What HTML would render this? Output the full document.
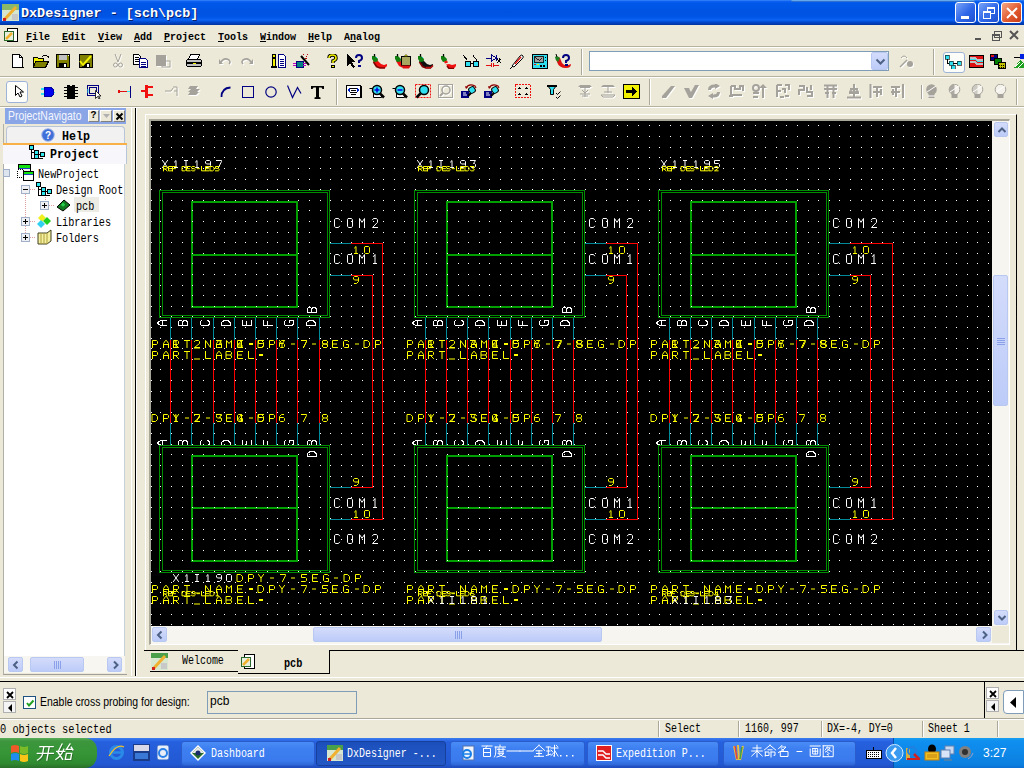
<!DOCTYPE html>
<html><head><meta charset="utf-8">
<style>
*{margin:0;padding:0;box-sizing:border-box}
html,body{width:1024px;height:768px;overflow:hidden;background:#ECE9D8;font-family:"Liberation Sans",sans-serif;position:relative}
.a{position:absolute}
text.sch{font-family:"Liberation Mono",monospace}
#title{left:0;top:0;width:1024px;height:25px;background:linear-gradient(#4a90f8 0,#0d63f2 1px,#0058ea 3px,#0053e2 12px,#0055e6 17px,#0c64f4 20px,#0048cf 22px,#00339f 25px)}
.ttl{left:21px;top:6px;color:#fff;font:bold 13.6px "Liberation Mono",monospace;white-space:pre;text-shadow:1px 1px 0 #0a1f6a;transform:scaleX(.988);transform-origin:0 0}
.tb{width:21px;height:21px;top:2px;border:1px solid #fff;border-radius:3px;background:linear-gradient(135deg,#7aa4f8,#2d66e8 55%,#1e50d0)}
.ss{position:absolute;font:11px "Liberation Mono",monospace;white-space:pre;color:#000;transform:scaleX(.91);transform-origin:0 0;line-height:12px}
.mn{position:absolute;top:31px;font:bold 11px "Liberation Mono",monospace;white-space:pre;color:#000;transform:scaleX(.91);transform-origin:0 0;line-height:12px}
.tr{position:absolute;font:12px "Liberation Mono",monospace;white-space:pre;color:#000;transform:scaleX(.85);transform-origin:0 0;line-height:12px}
.sb{position:absolute;font:bold 12px "Liberation Mono",monospace;white-space:pre;color:#000;transform:scaleX(.85);transform-origin:0 0;line-height:12px}
.hl{background:#fff;height:1px;width:1024px;left:0}
.dl{background:#b6b29e;height:1px;width:1024px;left:0}
.sep{width:2px;border-left:1px solid #aca899;border-right:1px solid #fff}
.xpb{border:1px solid #b9c8f0;border-radius:2px;background:linear-gradient(#d4dcfb,#bccbf8)}
.chev{stroke:#4d6185;stroke-width:2;fill:none}
.mdi{width:16px;height:17px;top:26px}
</style></head><body>

<!-- TITLE BAR -->
<div id="title" class="a">
  <div class="a ttl">DxDesigner - [sch\pcb]</div>
  <div class="a" style="left:791px;top:0;width:184px;height:2px;background:#62a8ec;border-bottom:1px solid #2f6fd0;border-radius:0 0 3px 3px"></div>
  <svg class="a" style="left:2px;top:4px" width="17" height="17" viewBox="0 0 17 17" shape-rendering="crispEdges">
    <rect x="0" y="0" width="17" height="17" fill="#d6e6cf"/><rect x="0" y="0" width="17" height="6" fill="#8ab86a"/>
    <rect x="10" y="10" width="6" height="6" fill="#c8c8c8"/>
    <path d="M3 15 L14 3" stroke="#f0b030" stroke-width="3" shape-rendering="auto"/><rect x="1" y="14" width="3" height="3" fill="#d02020"/>
  </svg>
  <div class="a tb" style="left:955px"><div class="a" style="left:5px;top:13px;width:8px;height:3px;background:#fff"></div></div>
  <div class="a tb" style="left:978px"><div class="a" style="left:8px;top:4px;width:8px;height:7px;border:1px solid #fff;border-top-width:2px"></div><div class="a" style="left:4px;top:8px;width:8px;height:8px;border:1px solid #fff;border-top-width:2px;background:#3a70e8"></div></div>
  <div class="a tb" style="left:1001px;background:linear-gradient(135deg,#f4a888,#e25a30 55%,#c83c18)"><svg class="a" style="left:4px;top:4px" width="12" height="12"><path d="M1 1L11 11M11 1L1 11" stroke="#fff" stroke-width="2"/></svg></div>
</div>

<!-- MENU -->
<svg class="a" style="left:3px;top:27px" width="17" height="17" viewBox="0 0 17 17">
  <rect x="4.5" y="1.5" width="10" height="13" fill="#fff" stroke="#000"/><rect x="1.5" y="4.5" width="9" height="9" fill="#e6f0e0" stroke="#2c6a2c"/>
  <path d="M3 12L9 6" stroke="#f0b030" stroke-width="2.5"/>
</svg>
<div class="mn" style="left:26px"><u>F</u>ile</div>
<div class="mn" style="left:62px"><u>E</u>dit</div>
<div class="mn" style="left:98px"><u>V</u>iew</div>
<div class="mn" style="left:134px"><u>A</u>dd</div>
<div class="mn" style="left:164px"><u>P</u>roject</div>
<div class="mn" style="left:218px"><u>T</u>ools</div>
<div class="mn" style="left:260px"><u>W</u>indow</div>
<div class="mn" style="left:308px"><u>H</u>elp</div>
<div class="mn" style="left:344px">A<u>n</u>alog</div>
<svg class="a" style="left:970px;top:27px" width="54" height="17" shape-rendering="crispEdges">
  <rect x="5" y="11" width="6" height="2" fill="#555"/>
  <rect x="22" y="7" width="7" height="6" fill="none" stroke="#555" stroke-width="1"/><rect x="21.5" y="6.5" width="7" height="2" fill="#555"/>
  <rect x="24.5" y="4.5" width="7" height="6" fill="none" stroke="#555"/>
  <path d="M40 4L48 12M48 4L40 12" stroke="#555" stroke-width="2" shape-rendering="auto"/>
</svg>
<div class="a dl" style="top:46px"></div>
<div class="a hl" style="top:47px"></div>

<!-- TOOLBAR ROW 1/2 separators -->
<div class="a dl" style="top:76px"></div>
<div class="a hl" style="top:77px"></div>
<div class="a dl" style="top:106px"></div>
<div class="a hl" style="top:107px"></div>
<div class="a sep" style="left:581px;top:49px;height:26px"></div>
<div class="a sep" style="left:933px;top:49px;height:26px"></div>
<div class="a sep" style="left:336px;top:79px;height:26px"></div>
<div class="a sep" style="left:649px;top:79px;height:26px"></div>
<div class="a sep" style="left:1016px;top:79px;height:26px"></div>
<!-- combo -->
<div class="a" style="left:589px;top:51px;width:300px;height:20px;background:#fff;border:1px solid #7f9db9"></div>
<div class="a xpb" style="left:871px;top:52px;width:17px;height:18px"><svg class="a" style="left:3px;top:5px" width="11" height="8"><path class="chev" d="M1.5 1.5L5.5 5.5L9.5 1.5"/></svg></div>
<!-- selected buttons -->
<div class="a" style="left:943px;top:52px;width:22px;height:21px;background:#fcfcf9;border:1px solid #9db4d8;border-radius:3px"></div>
<div class="a" style="left:6px;top:81px;width:22px;height:22px;background:#fcfcf9;border:1px solid #9db4d8;border-radius:3px"></div>
<svg class="a" style="left:12px;top:54px" width="12" height="14" viewBox="0 0 12 14" shape-rendering="crispEdges"><path d="M0.5 0.5h7l3 3v9.5h-10z" fill="#fff" stroke="#000"/><path d="M7.5 0.5v3h3" fill="none" stroke="#000"/><rect x="1" y="13" width="11" height="1" fill="#000"/></svg>
<svg class="a" style="left:33px;top:54px" width="16" height="14" viewBox="0 0 16 14" shape-rendering="crispEdges"><path d="M0.5 3.5h4l1 1h5v8h-10z" fill="#f0f000" stroke="#000"/><path d="M2.5 7.5h13l-3 6h-12z" fill="#808000" stroke="#000"/><path d="M9 3q3-4 6 0" fill="none" stroke="#000"/><path d="M13 2h3v3z" fill="#000"/></svg>
<svg class="a" style="left:56px;top:54px" width="15" height="14" viewBox="0 0 15 14" shape-rendering="crispEdges"><rect x="0.5" y="0.5" width="13" height="13" fill="#808000" stroke="#000"/><rect x="3" y="1" width="8" height="5" fill="#c0c0c0"/><rect x="3" y="9" width="8" height="4" fill="#000"/><rect x="8" y="10" width="2" height="3" fill="#fff"/><rect x="12" y="1" width="1" height="1" fill="#fff"/></svg>
<svg class="a" style="left:79px;top:54px" width="15" height="14" viewBox="0 0 15 14" shape-rendering="crispEdges"><rect x="0.5" y="0.5" width="13" height="13" fill="#808000" stroke="#000"/><rect x="3" y="1" width="8" height="5" fill="#808000"/><rect x="3" y="9" width="8" height="4" fill="#000"/><rect x="8" y="10" width="2" height="3" fill="#fff"/><path d="M1 7l3 4 8-9" stroke="#f0f000" stroke-width="2" fill="none" shape-rendering="auto"/></svg>
<svg class="a" style="left:113px;top:54px" width="11" height="15" viewBox="0 0 11 15"><g transform="translate(1 1)" fill="#fff" stroke="#fff"><path d="M2 0l3 8M8 0l-3 8" stroke-width="1" fill="none"/><circle cx="2.5" cy="11" r="2" fill="none"/><circle cx="7.5" cy="11" r="2" fill="none"/></g><g fill="#a4a29a" stroke="#a4a29a"><path d="M2 0l3 8M8 0l-3 8" stroke-width="1" fill="none"/><circle cx="2.5" cy="11" r="2" fill="none"/><circle cx="7.5" cy="11" r="2" fill="none"/></g></svg>
<svg class="a" style="left:133px;top:54px" width="16" height="14" viewBox="0 0 16 14" shape-rendering="crispEdges"><path d="M0.5 0.5h5l2 2v8h-7z" fill="#fff" stroke="#000"/><path d="M2 3h4M2 5h4M2 7h4" stroke="#000"/><path d="M6.5 4.5h6l2 2v7h-8z" fill="#fff" stroke="#000080"/><path d="M8 8h5M8 10h5M8 12h5" stroke="#000080"/></svg>
<svg class="a" style="left:156px;top:54px" width="16" height="15" viewBox="0 0 16 15"><g transform="translate(1 1)" fill="#fff" stroke="#fff"><rect x="0" y="1" width="10" height="11" stroke="none"/><rect x="6" y="7" width="8" height="6" fill="none" stroke-width="1"/></g><g fill="#a4a29a" stroke="#a4a29a"><rect x="0" y="1" width="10" height="11" stroke="none"/><rect x="6" y="7" width="8" height="6" fill="none" stroke-width="1"/></g></svg>
<svg class="a" style="left:186px;top:54px" width="17" height="14" viewBox="0 0 17 14" shape-rendering="crispEdges"><path d="M4.5 0.5h9l-2 5h-9z" fill="#fff" stroke="#000"/><rect x="0.5" y="5.5" width="15" height="7" rx="2" fill="#c0c0c0" stroke="#000"/><rect x="1" y="8" width="15" height="2" fill="#000"/><rect x="7" y="9" width="3" height="1" fill="#f0f000"/><rect x="2" y="12" width="12" height="1" fill="#000"/></svg>
<svg class="a" style="left:219px;top:57px" width="13" height="9" viewBox="0 0 13 9"><g transform="translate(1 1)" fill="#fff" stroke="#fff"><path d="M2 5q3-5 8-2q2 2 0 4" fill="none" stroke-width="1.5"/><path d="M0 2v5h4z" stroke="none"/></g><g fill="#a4a29a" stroke="#a4a29a"><path d="M2 5q3-5 8-2q2 2 0 4" fill="none" stroke-width="1.5"/><path d="M0 2v5h4z" stroke="none"/></g></svg>
<svg class="a" style="left:241px;top:57px" width="13" height="9" viewBox="0 0 13 9"><g transform="translate(1 1)" fill="#fff" stroke="#fff"><path d="M10 5q-3-5-8-2q-2 2 0 4" fill="none" stroke-width="1.5"/><path d="M12 2v5h-4z" stroke="none"/></g><g fill="#a4a29a" stroke="#a4a29a"><path d="M10 5q-3-5-8-2q-2 2 0 4" fill="none" stroke-width="1.5"/><path d="M12 2v5h-4z" stroke="none"/></g></svg>
<svg class="a" style="left:271px;top:54px" width="16" height="14" viewBox="0 0 16 14" shape-rendering="crispEdges"><rect x="1.5" y="4.5" width="3" height="8" fill="#f0f000" stroke="#000"/><rect x="1.5" y="0.5" width="3" height="3" fill="#f0f000" stroke="#000"/><rect x="0" y="12" width="6" height="2" fill="#000"/><path d="M7.5 0.5h5l2 2v11h-7z" fill="#fff" stroke="#000080"/><path d="M9 5h4M9 7h4M9 9h4M9 11h4" stroke="#000080"/></svg>
<svg class="a" style="left:293px;top:54px" width="17" height="14" viewBox="0 0 17 14" shape-rendering="crispEdges"><rect x="3" y="7" width="7" height="6" fill="#008080" stroke="#000080"/><path d="M0 9h3M0 11h3M10 9h3M10 11h3" stroke="#c000c0"/><path d="M8 2l8 9" stroke="#000" stroke-width="2" shape-rendering="auto"/><path d="M10 0h1M14 0h1M13 2h1M12 4h2" stroke="#c00000"/></svg>
<svg class="a" style="left:327px;top:54px" width="11" height="14" viewBox="0 0 11 14" shape-rendering="crispEdges"><path d="M2 4q0-3 3.5-3t3.5 3q0 2-3 3v2" fill="none" stroke="#000" stroke-width="3.5" shape-rendering="auto"/><path d="M2 4q0-3 3.5-3t3.5 3q0 2-3 3v2" fill="none" stroke="#f0f000" stroke-width="1.6" shape-rendering="auto"/><rect x="4" y="10.5" width="4" height="3" fill="#000"/><rect x="5" y="11.5" width="2" height="1" fill="#f0f000"/></svg>
<svg class="a" style="left:347px;top:54px" width="17" height="15" viewBox="0 0 17 15" shape-rendering="crispEdges"><path d="M0 0v12l3-3 3 5 2-1-3-5h4z" fill="#000"/><path d="M9 4q0-3 3-3t3 3q0 2-3 3v2" fill="none" stroke="#000080" stroke-width="2" shape-rendering="auto"/><rect x="11" y="11" width="3" height="2" fill="#000080"/></svg>
<svg class="a" style="left:371px;top:54px" width="17" height="15" viewBox="0 0 17 15"><path d="M2 7L6 6L10 10L13 11L16 10L16 12L14 14L9 14L5 12Z" fill="#f01010"/><path d="M2.5 8L5.5 12.5L9 14H14" stroke="#800000" stroke-width="1.6" fill="none"/><path d="M1 2H4L7 5L6.5 7.5L3 8L1 5Z" fill="#108010"/><path d="M3.5 0V2.5" stroke="#000" stroke-width="1.3"/><path d="M5 3L6 4" stroke="#20c0c0"/></svg>
<svg class="a" style="left:394px;top:54px" width="17" height="15" viewBox="0 0 17 15"><path d="M2 7L6 6L8 9V14H9L5 12Z" fill="#f01010"/><path d="M1 2H4L7 5L6.5 7.5L3 8L1 5Z" fill="#108010"/><path d="M3.5 0V2.5" stroke="#000" stroke-width="1.3"/><rect x="7.5" y="2.5" width="9" height="9" fill="#a8a860" stroke="#000"/><path d="M10 2.5L12 0.5L14 2.5Z" fill="#f0f000" stroke="#000" stroke-width=".6"/><path d="M7 11.5H17L15 14.5H9Z" fill="#e01010"/></svg>
<svg class="a" style="left:417px;top:54px" width="17" height="15" viewBox="0 0 17 15"><path d="M2 7L6 6L10 10L13 11L16 10L16 12L14 14L9 14L5 12Z" fill="#101010"/><path d="M2.5 8L5.5 12.5L9 14H14" stroke="#800000" stroke-width="1.6" fill="none"/><path d="M1 2H4L7 5L6.5 7.5L3 8L1 5Z" fill="#108010"/><path d="M3.5 0V2.5" stroke="#000" stroke-width="1.3"/><path d="M5 3L6 4" stroke="#20c0c0"/><path d="M9 13.5H14L16 11.5" stroke="#c01010" stroke-width="1.5" fill="none"/></svg>
<svg class="a" style="left:440px;top:54px" width="17" height="15" viewBox="0 0 17 15"><path d="M1 2H4L7 5L6.5 7.5L3 8L1 5Z" fill="#108010"/><path d="M3.5 0V2.5" stroke="#000" stroke-width="1.3"/><path d="M4 7.5L7 6.5L8 8.5L5 9.5Z" fill="#f01010"/><path d="M6 10.5L9 10L12 11L16 10L16 12L14 14.5L9 14.5Z" fill="#f01010"/><path d="M7 12L9 14.5H14" stroke="#800000" stroke-width="1.5" fill="none"/></svg>
<svg class="a" style="left:463px;top:55px" width="17" height="12" viewBox="0 0 17 12" shape-rendering="crispEdges"><path d="M0.5 0.5l4 5M10 0.5l4 5" stroke="#000" fill="none"/><rect x="2.5" y="6.5" width="5" height="5" rx="1" fill="#30e0f0" stroke="#000"/><rect x="10.5" y="6.5" width="5" height="5" rx="1" fill="#30e0f0" stroke="#000"/><path d="M7 8h4" stroke="#000"/></svg>
<svg class="a" style="left:486px;top:54px" width="16" height="14" viewBox="0 0 16 14" shape-rendering="crispEdges"><path d="M0 4h6M10 4h2" stroke="#000080"/><path d="M5.5 1v6l5-3z" fill="none" stroke="#000080"/><path d="M10.5 1v6" stroke="#000080"/><path d="M11 5l4 4M15 5l-4 4M13 4v3" stroke="#000" /><path d="M0 11h5M8 11h5M5.5 9v4M7.5 9v4" stroke="#e01010"/></svg>
<svg class="a" style="left:510px;top:54px" width="15" height="15" viewBox="0 0 15 15"><path d="M2 12l8-10q2-2 3 0q1 1-1 3l-8 8z" fill="#fff" stroke="#000" shape-rendering="auto"/><path d="M5 10l6-7" stroke="#e01010" stroke-width="1.3" shape-rendering="auto"/><path d="M0 15l3-3" stroke="#000" shape-rendering="auto"/></svg>
<svg class="a" style="left:532px;top:54px" width="16" height="15" viewBox="0 0 16 15" shape-rendering="crispEdges"><rect x="0.5" y="0.5" width="15" height="14" fill="#30e0f0" stroke="#000"/><rect x="2" y="2" width="9" height="6" fill="#a0a0a0" stroke="#000" stroke-width=".8"/><path d="M3 3l3.5 3 3.5-3" stroke="#000" fill="none" stroke-width=".8"/><rect x="2" y="10" width="2" height="1" fill="#e01010"/><rect x="5" y="10" width="2" height="1" fill="#f0f000"/><rect x="8" y="11" width="2" height="2" fill="#000"/><rect x="11" y="11" width="2" height="2" fill="#000"/><rect x="13" y="3" width="1" height="1" fill="#000"/><rect x="13" y="6" width="1" height="1" fill="#000"/></svg>
<svg class="a" style="left:555px;top:54px" width="17" height="15" viewBox="0 0 17 15"><path d="M1 4q2-2 4 0l2 5q3 4 9 1q0 4-5 4q-7 0-9-6z" fill="#e01010"/><path d="M0 3q2-2 5 1l-2 4q-3-2-3-5z" fill="#208020"/><path d="M8 4q0-3 3-3t3 3q0 2-3 3v2" fill="none" stroke="#000080" stroke-width="2"/><rect x="10" y="10" width="3" height="2" fill="#000080"/><path d="M1 0l1 3" stroke="#000"/></svg>
<svg class="a" style="left:899px;top:55px" width="17" height="14" viewBox="0 0 17 14"><g transform="translate(1 1)" fill="#fff" stroke="#fff"><path d="M1 12l7-7" stroke-width="1.5" fill="none"/><path d="M2 3q3-4 6 0" fill="none" stroke-width="1"/><circle cx="11" cy="9" r="3" stroke="none"/></g><g fill="#a4a29a" stroke="#a4a29a"><path d="M1 12l7-7" stroke-width="1.5" fill="none"/><path d="M2 3q3-4 6 0" fill="none" stroke-width="1"/><circle cx="11" cy="9" r="3" stroke="none"/></g></svg>
<svg class="a" style="left:945px;top:55px" width="17" height="14" viewBox="0 0 17 14" shape-rendering="crispEdges"><path d="M2 2v6h4M6 8v4h4M6 8h6" stroke="#000" fill="none"/><rect x="0" y="0" width="4" height="4" fill="#30e0f0" stroke="#000" stroke-width=".6"/><rect x="4" y="6" width="4" height="4" fill="#30e0f0" stroke="#000" stroke-width=".6"/><rect x="12" y="6" width="4" height="4" fill="#30e0f0" stroke="#000" stroke-width=".6"/><rect x="6" y="10" width="4" height="4" fill="#30e0f0" stroke="#000" stroke-width=".6"/></svg>
<svg class="a" style="left:969px;top:55px" width="15" height="13" viewBox="0 0 15 13" shape-rendering="crispEdges"><rect x="0.5" y="0.5" width="14" height="12" fill="#e01010" stroke="#000"/><path d="M1 3h5l2 2h6M1 7h5l2 2h6" stroke="#c0c0c0" stroke-width="1.5" fill="none"/><path d="M1 4h5l2 2h6" stroke="#30e0f0" fill="none"/></svg>
<svg class="a" style="left:990px;top:54px" width="16" height="15" viewBox="0 0 16 15" shape-rendering="crispEdges"><rect x="0.5" y="0.5" width="7" height="6" fill="#000080" stroke="#000"/><rect x="1" y="1" width="3" height="2" fill="#e01010"/><rect x="4.5" y="4.5" width="7" height="6" fill="#008000" stroke="#000"/><rect x="8.5" y="8.5" width="7" height="6" fill="#c0c000" stroke="#000"/><path d="M9 11h6M9 13h6" stroke="#000" stroke-dasharray="1 1"/></svg>
<svg class="a" style="left:1014px;top:54px" width="10" height="15" viewBox="0 0 10 15" shape-rendering="crispEdges"><path d="M0 14l6-8 4 4v4z" fill="#20a020"/><path d="M1 13l5-5M4 14l5-5" stroke="#fff"/><rect x="6" y="0" width="4" height="5" fill="#0020e0"/><path d="M0 3h6" stroke="#000"/></svg>
<svg class="a" style="left:15px;top:85px" width="9" height="13" viewBox="0 0 9 13"><path d="M0.5 0.5v10l2.5-2.5 2 4 2-1-2-4h3.5z" fill="#fff" stroke="#000"/></svg>
<svg class="a" style="left:41px;top:87px" width="14" height="10" viewBox="0 0 14 10" shape-rendering="crispEdges"><path d="M3 0.5h5q5 0 5 4.5t-5 4.5h-5z" fill="#0000f0" stroke="#0000a0"/><path d="M0 2h3M0 7h3" stroke="#30e0f0" stroke-width="1.5"/><path d="M13 5h1" stroke="#30e0f0"/></svg>
<svg class="a" style="left:64px;top:85px" width="14" height="14" viewBox="0 0 14 14" shape-rendering="crispEdges"><rect x="3" y="0" width="8" height="14" fill="#000"/><path d="M0 2h3M0 5h3M0 8h3M0 11h3M11 2h3M11 5h3M11 8h3M11 11h3" stroke="#000"/><rect x="6" y="0" width="2" height="1" fill="#ece9d8"/></svg>
<svg class="a" style="left:87px;top:85px" width="14" height="14" viewBox="0 0 14 14"><rect x="0.5" y="0.5" width="11" height="10" fill="none" stroke="#000080"/><rect x="2.5" y="2.5" width="7" height="6" fill="none" stroke="#000080"/><path d="M1 4v4" stroke="#30e0f0"/><path d="M8.5 5.5v8l2-2 1.5 2.5 1-.5-1.5-2.5h2.5z" fill="#fff" stroke="#000" stroke-width=".8"/></svg>
<svg class="a" style="left:118px;top:86px" width="14" height="12" viewBox="0 0 14 12" shape-rendering="crispEdges"><rect x="0" y="4" width="2" height="3" fill="#e01010"/><path d="M0 5.5h9" stroke="#e01010" stroke-width="1.2"/><path d="M9 5.5h3" stroke="#30e0f0"/><path d="M12.5 0v12" stroke="#000080" stroke-width="1.5"/></svg>
<svg class="a" style="left:141px;top:85px" width="13" height="13" viewBox="0 0 13 13" shape-rendering="crispEdges"><rect x="4" y="0" width="3" height="13" fill="#f01010"/><path d="M0 6h4M7 2h5M7 10h5" stroke="#f01010" stroke-width="1.5"/></svg>
<svg class="a" style="left:165px;top:85px" width="15" height="13" viewBox="0 0 15 13"><g transform="translate(1 1)" fill="#fff" stroke="#fff"><path d="M0 6h6M6 6l2-3M8 2h4v9M9 6h3" fill="none" stroke-width="1"/></g><g fill="#a4a29a" stroke="#a4a29a"><path d="M0 6h6M6 6l2-3M8 2h4v9M9 6h3" fill="none" stroke-width="1"/></g></svg>
<svg class="a" style="left:186px;top:84px" width="17" height="16" viewBox="0 0 17 16"><g transform="translate(1 1)" fill="#fff" stroke="#fff"><path d="M4 2h8l-2 3h4l-3 3h2l-3 3h-8l2-3h-2l3-3h-3z" stroke="none"/></g><g fill="#a4a29a" stroke="#a4a29a"><path d="M4 2h8l-2 3h4l-3 3h2l-3 3h-8l2-3h-2l3-3h-3z" stroke="none"/></g></svg>
<svg class="a" style="left:220px;top:86px" width="12" height="11" viewBox="0 0 12 11"><path d="M1.5 11q0-9 9-9.5" fill="none" stroke="#000080" stroke-width="1.8"/></svg>
<svg class="a" style="left:242px;top:86px" width="12" height="12" viewBox="0 0 12 12" shape-rendering="crispEdges"><rect x="0.5" y="0.5" width="11" height="11" fill="none" stroke="#000080" stroke-width="1.2"/></svg>
<svg class="a" style="left:265px;top:86px" width="12" height="12" viewBox="0 0 12 12"><circle cx="6" cy="6" r="5.2" fill="none" stroke="#000080" stroke-width="1.2"/></svg>
<svg class="a" style="left:287px;top:85px" width="15" height="14" viewBox="0 0 15 14"><path d="M0.5 0.5l5 12 5-10 3.5 6" fill="none" stroke="#000080" stroke-width="1.2"/></svg>
<svg class="a" style="left:311px;top:86px" width="13" height="13" viewBox="0 0 13 13"><path d="M0 0h13v3h-1.5l-1-1.5h-2.5v9.5l1.5.5v1.5h-6v-1.5l1.5-.5v-9.5h-2.5l-1 1.5h-1.5z" fill="#000"/></svg>
<svg class="a" style="left:346px;top:85px" width="16" height="13" viewBox="0 0 16 13" shape-rendering="crispEdges"><rect x="0.5" y="0.5" width="14" height="12" fill="#fff" stroke="#000"/><rect x="14" y="1" width="2" height="12" fill="#000"/><path d="M4 3h7M5 5h5M4 7h7M5 9h5" stroke="#000"/><path d="M1 5l3-2v4zM14 5l-3-2v4z" fill="#0020c0"/></svg>
<svg class="a" style="left:369px;top:84px" width="16" height="15" viewBox="0 0 16 15"><path d="M0.5 4.5h4v9h8v-3" fill="#fff" stroke="#000"/><circle cx="8" cy="6" r="4.5" fill="#30e0f0" stroke="#000" stroke-width="1.5"/><path d="M11 9.5l4 4" stroke="#000" stroke-width="2.5"/><path d="M5.5 6h5M8 3.5v5" stroke="#0000e0" stroke-width="1.5"/></svg>
<svg class="a" style="left:392px;top:84px" width="16" height="15" viewBox="0 0 16 15"><path d="M0.5 4.5h4v9h8v-3" fill="#fff" stroke="#000"/><circle cx="8" cy="6" r="4.5" fill="#30e0f0" stroke="#000" stroke-width="1.5"/><path d="M11 9.5l4 4" stroke="#000" stroke-width="2.5"/><path d="M5.5 6h5" stroke="#0000e0" stroke-width="1.5"/></svg>
<svg class="a" style="left:415px;top:84px" width="17" height="15" viewBox="0 0 17 15"><rect x="0.5" y="0.5" width="15" height="13" fill="none" stroke="#f01010" stroke-dasharray="2 1"/><circle cx="9" cy="6" r="4.5" fill="#30e0f0" stroke="#000" stroke-width="1.5"/><path d="M5.5 9.5l-4 4" stroke="#000" stroke-width="2.5"/></svg>
<svg class="a" style="left:438px;top:84px" width="17" height="15" viewBox="0 0 17 15"><g transform="translate(1 1)" fill="#fff" stroke="#fff"><rect x="0.5" y="0.5" width="14" height="13" fill="none" stroke-width="1"/><circle cx="8" cy="6" r="4" fill="none" stroke-width="1.5"/><path d="M5 9l-3 3" stroke-width="2"/></g><g fill="#a4a29a" stroke="#a4a29a"><rect x="0.5" y="0.5" width="14" height="13" fill="none" stroke-width="1"/><circle cx="8" cy="6" r="4" fill="none" stroke-width="1.5"/><path d="M5 9l-3 3" stroke-width="2"/></g></svg>
<svg class="a" style="left:461px;top:84px" width="16" height="15" viewBox="0 0 16 15"><rect x="0" y="7" width="8" height="7" fill="#000080"/><path d="M2 9h3M2 11h4" stroke="#fff"/><path d="M7 12l3-3" stroke="#000" stroke-width="2"/><rect x="8" y="3" width="6" height="6" rx="2" fill="#30e0f0" stroke="#000" transform="rotate(-30 11 6)"/><path d="M5 4q3-5 9-2l1 2" fill="none" stroke="#900000" stroke-width="1.2"/><path d="M4 2l1 3 2-2z" fill="#900000"/></svg>
<svg class="a" style="left:484px;top:84px" width="16" height="15" viewBox="0 0 16 15"><rect x="0" y="7" width="8" height="7" fill="#000080"/><path d="M2 9h3M2 11h4" stroke="#fff"/><path d="M7 12l3-3" stroke="#000" stroke-width="2"/><rect x="8" y="3" width="6" height="6" rx="2" fill="#30e0f0" stroke="#000" transform="rotate(-30 11 6)"/><path d="M5 4q3-5 9-2l1 2" fill="none" stroke="#900000" stroke-width="1.2"/><path d="M4 2l1 3 2-2z" fill="#900000"/></svg>
<svg class="a" style="left:515px;top:84px" width="16" height="14" viewBox="0 0 16 14" shape-rendering="crispEdges"><rect x="0.5" y="0.5" width="15" height="13" fill="none" stroke="#f01010" stroke-dasharray="2 1"/><path d="M4 4h1M4 3v2M11 4h1M11 3v2M4 10h1M4 9v2M11 10h1M11 9v2" stroke="#000"/><path d="M3 4h3M10 4h3M3 10h3M10 10h3" stroke="#000"/></svg>
<svg class="a" style="left:547px;top:85px" width="15" height="14" viewBox="0 0 15 14"><path d="M0.5 0.5h9l-3 4v5h-3v-5z" fill="#30e0f0" stroke="#000" /><path d="M0 0h10v2h-10z" fill="#000"/><path d="M9 8l1.5 1.5 3-3M9 12l1.5 1.5 3-3" stroke="#000" fill="none"/></svg>
<svg class="a" style="left:577px;top:84px" width="17" height="15" viewBox="0 0 17 15"><g transform="translate(1 1)" fill="#fff" stroke="#fff"><path d="M1 3h14l-2 -2h-10z" stroke="none"/><path d="M3 3h10v1h-10z" stroke="none"/><path d="M8 4v9M5 6l3 3 3-3M3 10h10M5 12h6" fill="none" stroke-width="1"/></g><g fill="#a4a29a" stroke="#a4a29a"><path d="M1 3h14l-2 -2h-10z" stroke="none"/><path d="M3 3h10v1h-10z" stroke="none"/><path d="M8 4v9M5 6l3 3 3-3M3 10h10M5 12h6" fill="none" stroke-width="1"/></g></svg>
<svg class="a" style="left:600px;top:84px" width="17" height="15" viewBox="0 0 17 15"><g transform="translate(1 1)" fill="#fff" stroke="#fff"><path d="M1 3h14l-2 -2h-10z" stroke="none"/><path d="M8 3v6M4 8h8M1 11h14l-2 2h-10z" fill="none" stroke-width="1"/></g><g fill="#a4a29a" stroke="#a4a29a"><path d="M1 3h14l-2 -2h-10z" stroke="none"/><path d="M8 3v6M4 8h8M1 11h14l-2 2h-10z" fill="none" stroke-width="1"/></g></svg>
<svg class="a" style="left:623px;top:84px" width="17" height="15" viewBox="0 0 17 15" shape-rendering="crispEdges"><rect x="0.5" y="0.5" width="16" height="14" fill="#f0f000" stroke="#000"/><path d="M3 6h6v-3l5 4.5-5 4.5v-3h-6z" fill="#000"/></svg>
<svg class="a" style="left:662px;top:85px" width="15" height="15" viewBox="0 0 15 15"><g transform="translate(1 1)" fill="#fff" stroke="#fff"><path d="M0 11l9-10h4l-9 12h-4z" stroke="none"/></g><g fill="#a4a29a" stroke="#a4a29a"><path d="M0 11l9-10h4l-9 12h-4z" stroke="none"/></g></svg>
<svg class="a" style="left:684px;top:85px" width="16" height="15" viewBox="0 0 16 15"><g transform="translate(1 1)" fill="#fff" stroke="#fff"><path d="M0 3h5l2 4 4-7h4l-7 13h-3z" stroke="none"/></g><g fill="#a4a29a" stroke="#a4a29a"><path d="M0 3h5l2 4 4-7h4l-7 13h-3z" stroke="none"/></g></svg>
<svg class="a" style="left:707px;top:84px" width="15" height="16" viewBox="0 0 15 16"><g transform="translate(1 1)" fill="#fff" stroke="#fff"><path d="M2.5 6q0-4 5-4h2M11.5 8q0 4-5 4h-2" fill="none" stroke-width="3"/><path d="M8 -1l5 3-5 3zM6 15l-5-3 5-3z" stroke="none"/></g><g fill="#a4a29a" stroke="#a4a29a"><path d="M2.5 6q0-4 5-4h2M11.5 8q0 4-5 4h-2" fill="none" stroke-width="3"/><path d="M8 -1l5 3-5 3zM6 15l-5-3 5-3z" stroke="none"/></g></svg>
<svg class="a" style="left:729px;top:84px" width="16" height="15" viewBox="0 0 16 15"><g transform="translate(1 1)" fill="#fff" stroke="#fff"><path d="M2 2v9h11M2 2h4v3h5v-3h3v5" fill="none" stroke-width="2"/><path d="M0 12h4" stroke-width="2"/></g><g fill="#a4a29a" stroke="#a4a29a"><path d="M2 2v9h11M2 2h4v3h5v-3h3v5" fill="none" stroke-width="2"/><path d="M0 12h4" stroke-width="2"/></g></svg>
<svg class="a" style="left:752px;top:84px" width="17" height="16" viewBox="0 0 17 16"><g transform="translate(1 1)" fill="#fff" stroke="#fff"><circle cx="4" cy="4" r="3" fill="none" stroke-width="2"/><path d="M11 0l4 4h-8z" stroke="none"/><path d="M11 4v10M1 9h6M1 13h5" fill="none" stroke-width="2"/></g><g fill="#a4a29a" stroke="#a4a29a"><circle cx="4" cy="4" r="3" fill="none" stroke-width="2"/><path d="M11 0l4 4h-8z" stroke="none"/><path d="M11 4v10M1 9h6M1 13h5" fill="none" stroke-width="2"/></g></svg>
<svg class="a" style="left:776px;top:84px" width="15" height="16" viewBox="0 0 15 16"><g transform="translate(1 1)" fill="#fff" stroke="#fff"><path d="M1 1v12M1 1h5M1 7h4M6 5h3v4M9 1h4v5M9 12h4M4 13h4" fill="none" stroke-width="2"/></g><g fill="#a4a29a" stroke="#a4a29a"><path d="M1 1v12M1 1h5M1 7h4M6 5h3v4M9 1h4v5M9 12h4M4 13h4" fill="none" stroke-width="2"/></g></svg>
<svg class="a" style="left:798px;top:84px" width="17" height="16" viewBox="0 0 17 16"><g transform="translate(1 1)" fill="#fff" stroke="#fff"><path d="M1 2h5v4h-5v5M9 12h5v-4h-5v-5M13 1v5" fill="none" stroke-width="2"/></g><g fill="#a4a29a" stroke="#a4a29a"><path d="M1 2h5v4h-5v5M9 12h5v-4h-5v-5M13 1v5" fill="none" stroke-width="2"/></g></svg>
<svg class="a" style="left:824px;top:84px" width="14" height="16" viewBox="0 0 14 16"><g transform="translate(1 1)" fill="#fff" stroke="#fff"><path d="M0 1.5h13M0 5h13M3.5 1v13M9.5 1v13M1 9h4M8 9h4" fill="none" stroke-width="2"/></g><g fill="#a4a29a" stroke="#a4a29a"><path d="M0 1.5h13M0 5h13M3.5 1v13M9.5 1v13M1 9h4M8 9h4" fill="none" stroke-width="2"/></g></svg>
<svg class="a" style="left:847px;top:84px" width="15" height="16" viewBox="0 0 15 16"><g transform="translate(1 1)" fill="#fff" stroke="#fff"><path d="M7 0v13M3 5h8M2 9h10M0 13.5h14" fill="none" stroke-width="2"/><circle cx="4" cy="8" r="2" stroke="none"/><circle cx="10" cy="8" r="2" stroke="none"/></g><g fill="#a4a29a" stroke="#a4a29a"><path d="M7 0v13M3 5h8M2 9h10M0 13.5h14" fill="none" stroke-width="2"/><circle cx="4" cy="8" r="2" stroke="none"/><circle cx="10" cy="8" r="2" stroke="none"/></g></svg>
<svg class="a" style="left:869px;top:84px" width="15" height="16" viewBox="0 0 15 16"><g transform="translate(1 1)" fill="#fff" stroke="#fff"><path d="M1.5 0v14M4 3h9M4 8h9M8 3v10M12 5v6" fill="none" stroke-width="2"/></g><g fill="#a4a29a" stroke="#a4a29a"><path d="M1.5 0v14M4 3h9M4 8h9M8 3v10M12 5v6" fill="none" stroke-width="2"/></g></svg>
<svg class="a" style="left:890px;top:84px" width="16" height="16" viewBox="0 0 16 16"><g transform="translate(1 1)" fill="#fff" stroke="#fff"><path d="M13 0v14M1 3h9M1 8h9M6 3v10M3 5v6" fill="none" stroke-width="2"/></g><g fill="#a4a29a" stroke="#a4a29a"><path d="M13 0v14M1 3h9M1 8h9M6 3v10M3 5v6" fill="none" stroke-width="2"/></g></svg>
<svg class="a" style="left:921px;top:85px" width="2" height="14" viewBox="0 0 2 14" shape-rendering="crispEdges"><rect x="0" y="0" width="1" height="14" fill="#a4a29a"/><rect x="1" y="0" width="1" height="14" fill="#fff"/></svg>
<svg class="a" style="left:925px;top:84px" width="14" height="15" viewBox="0 0 14 15"><circle cx="6.5" cy="5.5" r="5.3" fill="#a4a29a"/><rect x="3.5" y="10" width="6" height="4" fill="#a4a29a"/><path d="M3 12h7" stroke="#fff"/><path d="M2 8l9-6" stroke="#fff"/></svg>
<svg class="a" style="left:948px;top:84px" width="14" height="15" viewBox="0 0 14 15"><circle cx="6.5" cy="5.5" r="5.3" fill="#f4f2ea" stroke="#a4a29a"/><rect x="3.5" y="10" width="6" height="4" fill="#a4a29a"/><path d="M6.5 0.2a5.3 5.3 0 0 0 0 10.6z" fill="#a4a29a" opacity="0.9"/><path d="M2 8l9-6" stroke="#fff"/></svg>
<svg class="a" style="left:971px;top:84px" width="14" height="15" viewBox="0 0 14 15"><circle cx="6.5" cy="5.5" r="5.3" fill="#f4f2ea" stroke="#a4a29a"/><rect x="3.5" y="10" width="6" height="4" fill="#a4a29a"/><path d="M6.5 0.2a5.3 5.3 0 0 0 0 10.6z" fill="#a4a29a" opacity="0.5"/><path d="M2 8l9-6" stroke="#fff"/></svg>
<svg class="a" style="left:994px;top:84px" width="14" height="15" viewBox="0 0 14 15"><circle cx="6.5" cy="5.5" r="5.3" fill="#f4f2ea" stroke="#a4a29a"/><rect x="3.5" y="10" width="6" height="4" fill="#a4a29a"/><path d="M6.5 0.2a5.3 5.3 0 0 0 0 10.6z" fill="#a4a29a" opacity="0.0"/><path d="M2 8l9-6" stroke="#fff"/></svg>

<!-- LEFT PANEL -->
<div class="a" style="left:5px;top:108px;width:121px;height:16px;background:#8aa6e6"></div>
<div class="a" style="left:8px;top:109px;width:80px;height:15px;overflow:hidden"><div class="a" style="left:0;top:0;font:13px 'Liberation Sans',sans-serif;color:#f4f6ff;white-space:nowrap;line-height:14px;transform:scaleX(.8);transform-origin:0 0">ProjectNavigato</div></div>
<div class="a" style="left:88px;top:110px;width:11px;height:12px;background:#ece9d8;border:1px solid #fff;border-right-color:#808080;border-bottom-color:#808080;font:bold 10px 'Liberation Mono',monospace;line-height:10px;text-align:center;color:#000">?</div>
<div class="a" style="left:100px;top:110px;width:12px;height:12px;background:#ece9d8;border:1px solid #fff;border-right-color:#808080;border-bottom-color:#808080"><svg class="a" style="left:2px;top:3px" width="7" height="5"><path d="M0 0h7l-3.5 4z" fill="#b0b0b0"/></svg></div>
<div class="a" style="left:113px;top:110px;width:12px;height:12px;background:#ece9d8;border:1px solid #fff;border-right-color:#808080;border-bottom-color:#808080"><svg class="a" style="left:1px;top:1px" width="9" height="9"><path d="M1.5 1.5L7.5 7.5M7.5 1.5L1.5 7.5" stroke="#000" stroke-width="2"/></svg></div>

<div class="a" style="left:3px;top:124px;width:124px;height:551px;border-left:1px solid #b0b0a8;border-bottom:1px solid #a0a098"></div>
<!-- help tab -->
<div class="a" style="left:6px;top:126px;width:119px;height:18px;background:#f1f1f1;border:1px solid #b8c4d8;border-bottom:none;border-radius:4px 4px 0 0"></div>
<svg class="a" style="left:41px;top:128px" width="14" height="14"><circle cx="7" cy="7" r="6.3" fill="#3f6fd8" stroke="#a9bde8"/><text x="7" y="11" font-size="10" font-weight="bold" fill="#fff" text-anchor="middle" font-family="Liberation Sans">?</text></svg>
<div class="sb" style="left:62px;top:131px;transform:scaleX(.97)">Help</div>
<!-- project tab -->
<div class="a" style="left:3px;top:143px;width:124px;height:2px;background:#f8b048"></div>
<div class="a" style="left:3px;top:145px;width:124px;height:19px;background:#f7f7fb;border-right:1px solid #b8c4d8"></div>
<svg class="a" style="left:29px;top:145px" width="17" height="15" shape-rendering="crispEdges"><path d="M2.5 4v9.5h6M2.5 7.5h3M8.5 9.5h4M8.5 13.5h5" stroke="#000" fill="none"/><rect x="0.5" y="0.5" width="4" height="4" fill="#30e8f0" stroke="#000"/><rect x="5.5" y="5.5" width="4" height="4" fill="#30e8f0" stroke="#000"/><rect x="11.5" y="7.5" width="4" height="4" fill="#30e8f0" stroke="#000"/><rect x="5.5" y="9.5" width="4" height="4" fill="#30e8f0" stroke="#000"/></svg>
<div class="sb" style="left:50px;top:149px;transform:scaleX(.97)">Project</div>
<!-- tree -->
<div class="a" style="left:4px;top:164px;width:121px;height:493px;background:#fff;border-right:1px solid #c8d0dc"></div>
<div class="a" style="left:3px;top:169px;width:7px;height:8px;background:#dde4ee;border:1px solid #9fb0c8"></div>
<svg class="a" style="left:17px;top:164px" width="17" height="18" shape-rendering="crispEdges"><rect x="1.5" y="0.5" width="12" height="11" fill="#f0f0f0" stroke="#000"/><rect x="2" y="1" width="11" height="3" fill="#10e010"/><rect x="2" y="4" width="11" height="1" fill="#2040c0"/><rect x="0.5" y="5.5" width="6" height="8" fill="#fff" stroke="#000" stroke-dasharray="1 1"/><rect x="6.5" y="7.5" width="10" height="9" fill="#fff" stroke="#000"/><rect x="7" y="8" width="9" height="2" fill="#10e010"/><rect x="7" y="10" width="9" height="1" fill="#2040c0"/></svg>
<div class="tr" style="left:38px;top:169px">NewProject</div>
<!-- tree dotted lines -->
<svg class="a" style="left:20px;top:180px" width="40" height="64" shape-rendering="crispEdges"><path d="M5 6V57M10 9h6M25 15v10M29 25h5M10 41h6M10 57h6" stroke="#e0a0a0" stroke-dasharray="1 1" fill="none"/></svg>
<div class="a" style="left:21px;top:185px;width:9px;height:9px;background:#eef0f4;border:1px solid #9fb0c8"><div class="a" style="left:1px;top:3px;width:5px;height:1px;background:#000"></div></div>
<svg class="a" style="left:36px;top:182px" width="17" height="15" shape-rendering="crispEdges"><path d="M2.5 4v9.5h6M2.5 7.5h3M8.5 9.5h4M8.5 13.5h5" stroke="#000" fill="none"/><rect x="0.5" y="0.5" width="4" height="4" fill="#30e8f0" stroke="#000"/><rect x="5.5" y="5.5" width="4" height="4" fill="#30e8f0" stroke="#000"/><rect x="11.5" y="7.5" width="4" height="4" fill="#30e8f0" stroke="#000"/><rect x="5.5" y="9.5" width="4" height="4" fill="#30e8f0" stroke="#000"/></svg>
<div class="tr" style="left:56px;top:185px">Design Root</div>
<div class="a" style="left:40px;top:201px;width:9px;height:9px;background:#eef0f4;border:1px solid #9fb0c8"><div class="a" style="left:1px;top:3px;width:5px;height:1px;background:#000"></div><div class="a" style="left:3px;top:1px;width:1px;height:5px;background:#000"></div></div>
<svg class="a" style="left:56px;top:198px" width="15" height="14"><path d="M1 9L8 2L14 7L7 13z" fill="#127a20" stroke="#000"/><rect x="6" y="5" width="3" height="3" fill="#2ad050" transform="rotate(40 7 6)"/></svg>
<div class="a" style="left:74px;top:197px;width:25px;height:15px;background:#ecece4"></div>
<div class="tr" style="left:76px;top:201px">pcb</div>
<div class="a" style="left:21px;top:217px;width:9px;height:9px;background:#eef0f4;border:1px solid #9fb0c8"><div class="a" style="left:1px;top:3px;width:5px;height:1px;background:#000"></div><div class="a" style="left:3px;top:1px;width:1px;height:5px;background:#000"></div></div>
<svg class="a" style="left:36px;top:214px" width="16" height="14"><path d="M6 0l4 4-4 4-4-4z" fill="#f0f020"/><path d="M11 3l4 4-4 4-4-4z" fill="#20d020"/><path d="M5 6l4 4-4 4-4-4z" fill="#30d0f0"/></svg>
<div class="tr" style="left:56px;top:217px">Libraries</div>
<div class="a" style="left:21px;top:233px;width:9px;height:9px;background:#eef0f4;border:1px solid #9fb0c8"><div class="a" style="left:1px;top:3px;width:5px;height:1px;background:#000"></div><div class="a" style="left:3px;top:1px;width:1px;height:5px;background:#000"></div></div>
<svg class="a" style="left:37px;top:229px" width="15" height="16"><path d="M1 4h9l4-3v11l-4 3H1z" fill="#f4f0a0" stroke="#404020"/><path d="M4 4v11M7 4v11M10 4v11" stroke="#b0a040"/></svg>
<div class="tr" style="left:56px;top:233px">Folders</div>
<!-- panel scrollbar -->
<div class="a" style="left:4px;top:656px;width:121px;height:17px;background:#f7f6f0"></div>
<div class="a xpb" style="left:8px;top:657px;width:15px;height:15px"><svg class="a" style="left:3px;top:2px" width="8" height="10"><path class="chev" d="M5.5 1.5L2 5l3.5 3.5"/></svg></div>
<div class="a xpb" style="left:30px;top:657px;width:54px;height:15px"><svg class="a" style="left:22px;top:3px" width="9" height="8" shape-rendering="crispEdges"><path d="M1 0v8M3 0v8M5 0v8M7 0v8" stroke="#8aa0e8"/></svg></div>
<div class="a xpb" style="left:107px;top:657px;width:15px;height:15px"><svg class="a" style="left:4px;top:2px" width="8" height="10"><path class="chev" d="M2 1.5L5.5 5 2 8.5"/></svg></div>
<div class="a" style="left:135px;top:108px;width:1px;height:568px;background:#000"></div>

<!-- CANVAS FRAME -->
<div class="a" style="left:145px;top:114px;width:872px;height:537px;border-left:1px solid #fff;border-top:1px solid #fff;border-right:1px solid #000"></div>
<div class="a" style="left:136px;top:108px;width:1px;height:568px;background:#fff"></div><div class="a" style="left:131px;top:108px;width:1px;height:568px;background:#fff"></div>
<div class="a" style="left:149px;top:119px;width:861px;height:526px;background:#f6f5f0;border-left:2px solid #a8a698;border-top:2px solid #a8a698;border-right:1px solid #fff;border-bottom:1px solid #fff"></div>
<svg class="a" style="left:151px;top:121px" width="841" height="505" viewBox="151 121 841 505" shape-rendering="crispEdges">
<rect x="151" y="121" width="841" height="505" fill="#000"/>
<rect x="159" y="190" width="171" height="1" fill="#008c00"/><rect x="159" y="317" width="171" height="1" fill="#008c00"/><rect x="159" y="190" width="1" height="128" fill="#008c00"/><rect x="329" y="190" width="1" height="128" fill="#008c00"/>
<rect x="162" y="192" width="166" height="1" fill="#008c00"/><rect x="162" y="315" width="166" height="1" fill="#008c00"/><rect x="162" y="192" width="1" height="124" fill="#008c00"/><rect x="327" y="192" width="1" height="124" fill="#008c00"/>
<rect x="191" y="201" width="107" height="2" fill="#00a000"/>
<rect x="191" y="306" width="107" height="2" fill="#00a000"/>
<rect x="191" y="254" width="107" height="2" fill="#00a000"/>
<rect x="191" y="201" width="2" height="107" fill="#00a000"/>
<rect x="296" y="201" width="2" height="107" fill="#00a000"/>
<rect x="170" y="318" width="1" height="22" fill="#008a9a"/>
<rect x="170" y="340" width="1" height="83" fill="#ff0000"/>
<rect x="170" y="423" width="1" height="22" fill="#008a9a"/>
<rect x="191" y="318" width="1" height="22" fill="#008a9a"/>
<rect x="191" y="340" width="1" height="83" fill="#ff0000"/>
<rect x="191" y="423" width="1" height="22" fill="#008a9a"/>
<rect x="213" y="318" width="1" height="22" fill="#008a9a"/>
<rect x="213" y="340" width="1" height="83" fill="#ff0000"/>
<rect x="213" y="423" width="1" height="22" fill="#008a9a"/>
<rect x="234" y="318" width="1" height="22" fill="#008a9a"/>
<rect x="234" y="340" width="1" height="83" fill="#ff0000"/>
<rect x="234" y="423" width="1" height="22" fill="#008a9a"/>
<rect x="255" y="318" width="1" height="22" fill="#008a9a"/>
<rect x="255" y="340" width="1" height="83" fill="#ff0000"/>
<rect x="255" y="423" width="1" height="22" fill="#008a9a"/>
<rect x="276" y="318" width="1" height="22" fill="#008a9a"/>
<rect x="276" y="340" width="1" height="83" fill="#ff0000"/>
<rect x="276" y="423" width="1" height="22" fill="#008a9a"/>
<rect x="297" y="318" width="1" height="22" fill="#008a9a"/>
<rect x="297" y="340" width="1" height="83" fill="#ff0000"/>
<rect x="297" y="423" width="1" height="22" fill="#008a9a"/>
<rect x="319" y="318" width="1" height="22" fill="#008a9a"/>
<rect x="319" y="340" width="1" height="83" fill="#ff0000"/>
<rect x="319" y="423" width="1" height="22" fill="#008a9a"/>
<rect x="330" y="243" width="21" height="1" fill="#008a9a"/>
<rect x="351" y="243" width="32" height="1" fill="#ff0000"/>
<rect x="330" y="275" width="21" height="1" fill="#008a9a"/>
<rect x="351" y="275" width="22" height="1" fill="#ff0000"/>
<rect x="382" y="243" width="1" height="277" fill="#ff0000"/>
<rect x="372" y="275" width="1" height="213" fill="#ff0000"/>
<rect x="159" y="445" width="171" height="1" fill="#008c00"/><rect x="159" y="572" width="171" height="1" fill="#008c00"/><rect x="159" y="445" width="1" height="128" fill="#008c00"/><rect x="329" y="445" width="1" height="128" fill="#008c00"/>
<rect x="162" y="447" width="166" height="1" fill="#008c00"/><rect x="162" y="570" width="166" height="1" fill="#008c00"/><rect x="162" y="447" width="1" height="124" fill="#008c00"/><rect x="327" y="447" width="1" height="124" fill="#008c00"/>
<rect x="191" y="455" width="107" height="2" fill="#00a000"/>
<rect x="191" y="560" width="107" height="2" fill="#00a000"/>
<rect x="191" y="507" width="107" height="2" fill="#00a000"/>
<rect x="191" y="455" width="2" height="107" fill="#00a000"/>
<rect x="296" y="455" width="2" height="107" fill="#00a000"/>
<rect x="330" y="487" width="21" height="1" fill="#008a9a"/>
<rect x="351" y="487" width="22" height="1" fill="#ff0000"/>
<rect x="330" y="519" width="21" height="1" fill="#008a9a"/>
<rect x="351" y="519" width="32" height="1" fill="#ff0000"/>
<rect x="414" y="190" width="171" height="1" fill="#008c00"/><rect x="414" y="317" width="171" height="1" fill="#008c00"/><rect x="414" y="190" width="1" height="128" fill="#008c00"/><rect x="584" y="190" width="1" height="128" fill="#008c00"/>
<rect x="417" y="192" width="166" height="1" fill="#008c00"/><rect x="417" y="315" width="166" height="1" fill="#008c00"/><rect x="417" y="192" width="1" height="124" fill="#008c00"/><rect x="582" y="192" width="1" height="124" fill="#008c00"/>
<rect x="446" y="201" width="107" height="2" fill="#00a000"/>
<rect x="446" y="306" width="107" height="2" fill="#00a000"/>
<rect x="446" y="254" width="107" height="2" fill="#00a000"/>
<rect x="446" y="201" width="2" height="107" fill="#00a000"/>
<rect x="551" y="201" width="2" height="107" fill="#00a000"/>
<rect x="425" y="318" width="1" height="22" fill="#008a9a"/>
<rect x="425" y="340" width="1" height="83" fill="#ff0000"/>
<rect x="425" y="423" width="1" height="22" fill="#008a9a"/>
<rect x="446" y="318" width="1" height="22" fill="#008a9a"/>
<rect x="446" y="340" width="1" height="83" fill="#ff0000"/>
<rect x="446" y="423" width="1" height="22" fill="#008a9a"/>
<rect x="467" y="318" width="1" height="22" fill="#008a9a"/>
<rect x="467" y="340" width="1" height="83" fill="#ff0000"/>
<rect x="467" y="423" width="1" height="22" fill="#008a9a"/>
<rect x="488" y="318" width="1" height="22" fill="#008a9a"/>
<rect x="488" y="340" width="1" height="83" fill="#ff0000"/>
<rect x="488" y="423" width="1" height="22" fill="#008a9a"/>
<rect x="510" y="318" width="1" height="22" fill="#008a9a"/>
<rect x="510" y="340" width="1" height="83" fill="#ff0000"/>
<rect x="510" y="423" width="1" height="22" fill="#008a9a"/>
<rect x="531" y="318" width="1" height="22" fill="#008a9a"/>
<rect x="531" y="340" width="1" height="83" fill="#ff0000"/>
<rect x="531" y="423" width="1" height="22" fill="#008a9a"/>
<rect x="552" y="318" width="1" height="22" fill="#008a9a"/>
<rect x="552" y="340" width="1" height="83" fill="#ff0000"/>
<rect x="552" y="423" width="1" height="22" fill="#008a9a"/>
<rect x="573" y="318" width="1" height="22" fill="#008a9a"/>
<rect x="573" y="340" width="1" height="83" fill="#ff0000"/>
<rect x="573" y="423" width="1" height="22" fill="#008a9a"/>
<rect x="585" y="243" width="21" height="1" fill="#008a9a"/>
<rect x="606" y="243" width="32" height="1" fill="#ff0000"/>
<rect x="585" y="275" width="21" height="1" fill="#008a9a"/>
<rect x="606" y="275" width="21" height="1" fill="#ff0000"/>
<rect x="637" y="243" width="1" height="277" fill="#ff0000"/>
<rect x="626" y="275" width="1" height="213" fill="#ff0000"/>
<rect x="414" y="445" width="171" height="1" fill="#008c00"/><rect x="414" y="572" width="171" height="1" fill="#008c00"/><rect x="414" y="445" width="1" height="128" fill="#008c00"/><rect x="584" y="445" width="1" height="128" fill="#008c00"/>
<rect x="417" y="447" width="166" height="1" fill="#008c00"/><rect x="417" y="570" width="166" height="1" fill="#008c00"/><rect x="417" y="447" width="1" height="124" fill="#008c00"/><rect x="582" y="447" width="1" height="124" fill="#008c00"/>
<rect x="446" y="455" width="107" height="2" fill="#00a000"/>
<rect x="446" y="560" width="107" height="2" fill="#00a000"/>
<rect x="446" y="507" width="107" height="2" fill="#00a000"/>
<rect x="446" y="455" width="2" height="107" fill="#00a000"/>
<rect x="551" y="455" width="2" height="107" fill="#00a000"/>
<rect x="585" y="487" width="21" height="1" fill="#008a9a"/>
<rect x="606" y="487" width="21" height="1" fill="#ff0000"/>
<rect x="585" y="519" width="21" height="1" fill="#008a9a"/>
<rect x="606" y="519" width="32" height="1" fill="#ff0000"/>
<rect x="658" y="190" width="171" height="1" fill="#008c00"/><rect x="658" y="317" width="171" height="1" fill="#008c00"/><rect x="658" y="190" width="1" height="128" fill="#008c00"/><rect x="828" y="190" width="1" height="128" fill="#008c00"/>
<rect x="661" y="192" width="166" height="1" fill="#008c00"/><rect x="661" y="315" width="166" height="1" fill="#008c00"/><rect x="661" y="192" width="1" height="124" fill="#008c00"/><rect x="826" y="192" width="1" height="124" fill="#008c00"/>
<rect x="690" y="201" width="107" height="2" fill="#00a000"/>
<rect x="690" y="306" width="107" height="2" fill="#00a000"/>
<rect x="690" y="254" width="107" height="2" fill="#00a000"/>
<rect x="690" y="201" width="2" height="107" fill="#00a000"/>
<rect x="795" y="201" width="2" height="107" fill="#00a000"/>
<rect x="669" y="318" width="1" height="22" fill="#008a9a"/>
<rect x="669" y="340" width="1" height="83" fill="#ff0000"/>
<rect x="669" y="423" width="1" height="22" fill="#008a9a"/>
<rect x="690" y="318" width="1" height="22" fill="#008a9a"/>
<rect x="690" y="340" width="1" height="83" fill="#ff0000"/>
<rect x="690" y="423" width="1" height="22" fill="#008a9a"/>
<rect x="711" y="318" width="1" height="22" fill="#008a9a"/>
<rect x="711" y="340" width="1" height="83" fill="#ff0000"/>
<rect x="711" y="423" width="1" height="22" fill="#008a9a"/>
<rect x="732" y="318" width="1" height="22" fill="#008a9a"/>
<rect x="732" y="340" width="1" height="83" fill="#ff0000"/>
<rect x="732" y="423" width="1" height="22" fill="#008a9a"/>
<rect x="754" y="318" width="1" height="22" fill="#008a9a"/>
<rect x="754" y="340" width="1" height="83" fill="#ff0000"/>
<rect x="754" y="423" width="1" height="22" fill="#008a9a"/>
<rect x="775" y="318" width="1" height="22" fill="#008a9a"/>
<rect x="775" y="340" width="1" height="83" fill="#ff0000"/>
<rect x="775" y="423" width="1" height="22" fill="#008a9a"/>
<rect x="796" y="318" width="1" height="22" fill="#008a9a"/>
<rect x="796" y="340" width="1" height="83" fill="#ff0000"/>
<rect x="796" y="423" width="1" height="22" fill="#008a9a"/>
<rect x="817" y="318" width="1" height="22" fill="#008a9a"/>
<rect x="817" y="340" width="1" height="83" fill="#ff0000"/>
<rect x="817" y="423" width="1" height="22" fill="#008a9a"/>
<rect x="829" y="243" width="21" height="1" fill="#008a9a"/>
<rect x="850" y="243" width="43" height="1" fill="#ff0000"/>
<rect x="829" y="275" width="21" height="1" fill="#008a9a"/>
<rect x="850" y="275" width="21" height="1" fill="#ff0000"/>
<rect x="892" y="243" width="1" height="277" fill="#ff0000"/>
<rect x="870" y="275" width="1" height="213" fill="#ff0000"/>
<rect x="658" y="445" width="171" height="1" fill="#008c00"/><rect x="658" y="572" width="171" height="1" fill="#008c00"/><rect x="658" y="445" width="1" height="128" fill="#008c00"/><rect x="828" y="445" width="1" height="128" fill="#008c00"/>
<rect x="661" y="447" width="166" height="1" fill="#008c00"/><rect x="661" y="570" width="166" height="1" fill="#008c00"/><rect x="661" y="447" width="1" height="124" fill="#008c00"/><rect x="826" y="447" width="1" height="124" fill="#008c00"/>
<rect x="690" y="455" width="107" height="2" fill="#00a000"/>
<rect x="690" y="560" width="107" height="2" fill="#00a000"/>
<rect x="690" y="507" width="107" height="2" fill="#00a000"/>
<rect x="690" y="455" width="2" height="107" fill="#00a000"/>
<rect x="795" y="455" width="2" height="107" fill="#00a000"/>
<rect x="829" y="487" width="21" height="1" fill="#008a9a"/>
<rect x="850" y="487" width="21" height="1" fill="#ff0000"/>
<rect x="829" y="519" width="21" height="1" fill="#008a9a"/>
<rect x="850" y="519" width="43" height="1" fill="#ff0000"/>
<defs><path id="sf65" d="M0 7V3L2 0H3L5 3V7M0 4H5" vector-effect="non-scaling-stroke"/><path id="sf66" d="M0 0H4L5 1V2.5L4 3.5L5 4.5V6L4 7H0ZM0 3.5H4" vector-effect="non-scaling-stroke"/><path id="sf67" d="M5 1L4 0H1L0 1V6L1 7H4L5 6" vector-effect="non-scaling-stroke"/><path id="sf68" d="M0 0H3L5 2V5L3 7H0Z" vector-effect="non-scaling-stroke"/><path id="sf69" d="M5 0H0V7H5M0 3.5H4" vector-effect="non-scaling-stroke"/><path id="sf70" d="M5 0H0V7M0 3.5H4" vector-effect="non-scaling-stroke"/><path id="sf71" d="M5 1L4 0H1L0 1V6L1 7H5V4H3" vector-effect="non-scaling-stroke"/><path id="sf72" d="M0 0V7M5 0V7M0 3.5H5" vector-effect="non-scaling-stroke"/><path id="sf73" d="M1 0H4M2.5 0V7M1 7H4" vector-effect="non-scaling-stroke"/><path id="sf76" d="M0 0V7H5" vector-effect="non-scaling-stroke"/><path id="sf77" d="M0 7V0L2.5 3L5 0V7" vector-effect="non-scaling-stroke"/><path id="sf78" d="M0 7V0L5 7V0" vector-effect="non-scaling-stroke"/><path id="sf79" d="M1 0H4L5 1V6L4 7H1L0 6V1Z" vector-effect="non-scaling-stroke"/><path id="sf80" d="M0 7V0H4L5 1V3L4 4H0" vector-effect="non-scaling-stroke"/><path id="sf82" d="M0 7V0H4L5 1V3L4 4H0M2 4L5 7" vector-effect="non-scaling-stroke"/><path id="sf83" d="M5 1L4 0H1L0 1V2.5L1 3.5H4L5 4.5V6L4 7H1L0 6" vector-effect="non-scaling-stroke"/><path id="sf84" d="M0 0H5M2.5 0V7" vector-effect="non-scaling-stroke"/><path id="sf88" d="M0 0L5 7M5 0L0 7" vector-effect="non-scaling-stroke"/><path id="sf89" d="M0 0L2.5 3.5L5 0M2.5 3.5V7" vector-effect="non-scaling-stroke"/><path id="sf90" d="M0 0H5L0 7H5" vector-effect="non-scaling-stroke"/><path id="sf48" d="M1 0H4L5 1V6L4 7H1L0 6V1Z" vector-effect="non-scaling-stroke"/><path id="sf49" d="M1 1.5L2.5 0V7M1 7H4" vector-effect="non-scaling-stroke"/><path id="sf50" d="M0 1L1 0H4L5 1V3L0 7H5" vector-effect="non-scaling-stroke"/><path id="sf51" d="M0 0H5L3 3H4L5 4V6L4 7H1L0 6" vector-effect="non-scaling-stroke"/><path id="sf52" d="M4 7V0L0 5V5.5H5" vector-effect="non-scaling-stroke"/><path id="sf53" d="M5 0H0V3H4L5 4V6L4 7H0" vector-effect="non-scaling-stroke"/><path id="sf54" d="M4 0H2L0 2V6L1 7H4L5 6V4L4 3H0" vector-effect="non-scaling-stroke"/><path id="sf55" d="M0 0H5V1L2 7" vector-effect="non-scaling-stroke"/><path id="sf56" d="M1 0H4L5 1V2.5L4 3.5L5 4.5V6L4 7H1L0 6V4.5L1 3.5L0 2.5V1ZM1 3.5H4" vector-effect="non-scaling-stroke"/><path id="sf57" d="M5 3.5H1L0 2.5V1L1 0H4L5 1V5L3 7H1" vector-effect="non-scaling-stroke"/><path id="sf45" d="M1 3.5H4" vector-effect="non-scaling-stroke"/><path id="sf61" d="M1 3.5H4" vector-effect="non-scaling-stroke"/><path id="sf95" d="M0 7.5H5" vector-effect="non-scaling-stroke"/><rect id="sfblk" x="0.5" y="3" width="4" height="1.5" stroke="none" fill="currentColor"/></defs>
<defs><path id="gr" d="M151 0h1v1h-1zM160 0h1v1h-1zM171 0h1v1h-1zM182 0h1v1h-1zM192 0h1v1h-1zM203 0h1v1h-1zM214 0h1v1h-1zM224 0h1v1h-1zM235 0h1v1h-1zM245 0h1v1h-1zM256 0h1v1h-1zM267 0h1v1h-1zM277 0h1v1h-1zM288 0h1v1h-1zM298 0h1v1h-1zM309 0h1v1h-1zM320 0h1v1h-1zM330 0h1v1h-1zM341 0h1v1h-1zM351 0h1v1h-1zM362 0h1v1h-1zM373 0h1v1h-1zM383 0h1v1h-1zM394 0h1v1h-1zM404 0h1v1h-1zM415 0h1v1h-1zM426 0h1v1h-1zM436 0h1v1h-1zM447 0h1v1h-1zM458 0h1v1h-1zM468 0h1v1h-1zM479 0h1v1h-1zM489 0h1v1h-1zM500 0h1v1h-1zM511 0h1v1h-1zM521 0h1v1h-1zM532 0h1v1h-1zM542 0h1v1h-1zM553 0h1v1h-1zM564 0h1v1h-1zM574 0h1v1h-1zM585 0h1v1h-1zM595 0h1v1h-1zM606 0h1v1h-1zM617 0h1v1h-1zM627 0h1v1h-1zM638 0h1v1h-1zM649 0h1v1h-1zM659 0h1v1h-1zM670 0h1v1h-1zM680 0h1v1h-1zM691 0h1v1h-1zM702 0h1v1h-1zM712 0h1v1h-1zM723 0h1v1h-1zM733 0h1v1h-1zM744 0h1v1h-1zM755 0h1v1h-1zM765 0h1v1h-1zM776 0h1v1h-1zM786 0h1v1h-1zM797 0h1v1h-1zM808 0h1v1h-1zM818 0h1v1h-1zM829 0h1v1h-1zM839 0h1v1h-1zM850 0h1v1h-1zM861 0h1v1h-1zM871 0h1v1h-1zM882 0h1v1h-1zM893 0h1v1h-1zM903 0h1v1h-1zM914 0h1v1h-1zM924 0h1v1h-1zM935 0h1v1h-1zM946 0h1v1h-1zM956 0h1v1h-1zM967 0h1v1h-1zM977 0h1v1h-1zM988 0h1v1h-1z" fill="#fff"/></defs>
<use href="#gr" y="125"/>
<use href="#gr" y="136"/>
<use href="#gr" y="147"/>
<use href="#gr" y="157"/>
<use href="#gr" y="168"/>
<use href="#gr" y="179"/>
<use href="#gr" y="189"/>
<use href="#gr" y="200"/>
<use href="#gr" y="210"/>
<use href="#gr" y="221"/>
<use href="#gr" y="232"/>
<use href="#gr" y="242"/>
<use href="#gr" y="253"/>
<use href="#gr" y="263"/>
<use href="#gr" y="274"/>
<use href="#gr" y="285"/>
<use href="#gr" y="295"/>
<use href="#gr" y="306"/>
<use href="#gr" y="316"/>
<use href="#gr" y="327"/>
<use href="#gr" y="338"/>
<use href="#gr" y="348"/>
<use href="#gr" y="359"/>
<use href="#gr" y="369"/>
<use href="#gr" y="380"/>
<use href="#gr" y="391"/>
<use href="#gr" y="401"/>
<use href="#gr" y="412"/>
<use href="#gr" y="423"/>
<use href="#gr" y="433"/>
<use href="#gr" y="444"/>
<use href="#gr" y="454"/>
<use href="#gr" y="465"/>
<use href="#gr" y="476"/>
<use href="#gr" y="486"/>
<use href="#gr" y="497"/>
<use href="#gr" y="507"/>
<use href="#gr" y="518"/>
<use href="#gr" y="529"/>
<use href="#gr" y="539"/>
<use href="#gr" y="550"/>
<use href="#gr" y="560"/>
<use href="#gr" y="571"/>
<use href="#gr" y="582"/>
<use href="#gr" y="592"/>
<use href="#gr" y="603"/>
<use href="#gr" y="614"/>
<use href="#gr" y="624"/>
<g stroke="#ffffff" color="#ffffff" fill="none" stroke-width="1.0" stroke-linecap="square" shape-rendering="geometricPrecision"><use href="#sf88" transform="translate(162.50 160.50) scale(1.0 1.0)"/><use href="#sf49" transform="translate(173.50 160.50) scale(1.0 1.0)"/><use href="#sf73" transform="translate(183.50 160.50) scale(1.0 1.0)"/><use href="#sf49" transform="translate(194.50 160.50) scale(1.0 1.0)"/><use href="#sf57" transform="translate(205.50 160.50) scale(1.0 1.0)"/><use href="#sf55" transform="translate(216.50 160.50) scale(1.0 1.0)"/></g>
<g stroke="#ffff00" color="#ffff00" fill="none" stroke-width="1.0" stroke-linecap="square" shape-rendering="geometricPrecision"><use href="#sf82" transform="translate(163.50 166.50) scale(0.72 0.62)"/><use href="#sf69" transform="translate(168.50 166.50) scale(0.72 0.62)"/><use href="#sf70" transform="translate(172.50 166.50) scale(0.72 0.62)"/><use href="#sf68" transform="translate(182.50 166.50) scale(0.72 0.62)"/><use href="#sf69" transform="translate(186.50 166.50) scale(0.72 0.62)"/><use href="#sf83" transform="translate(191.50 166.50) scale(0.72 0.62)"/><use href="#sf45" transform="translate(196.50 166.50) scale(0.72 0.62)"/><use href="#sf76" transform="translate(201.50 166.50) scale(0.72 0.62)"/><use href="#sf69" transform="translate(205.50 166.50) scale(0.72 0.62)"/><use href="#sf68" transform="translate(210.50 166.50) scale(0.72 0.62)"/><use href="#sf53" transform="translate(215.50 166.50) scale(0.72 0.62)"/></g>
<g stroke="#ffffff" color="#ffffff" fill="none" stroke-width="1.0" stroke-linecap="square" shape-rendering="geometricPrecision"><use href="#sf67" transform="translate(334.50 218.50) scale(1.0 1.2857142857142858)"/><use href="#sf79" transform="translate(347.50 218.50) scale(1.0 1.2857142857142858)"/><use href="#sf77" transform="translate(359.50 218.50) scale(1.0 1.2857142857142858)"/><use href="#sf50" transform="translate(372.50 218.50) scale(1.0 1.2857142857142858)"/></g>
<g stroke="#ffff00" color="#ffff00" fill="none" stroke-width="1.0" stroke-linecap="square" shape-rendering="geometricPrecision"><use href="#sf49" transform="translate(353.50 246.50) scale(1.0 1.0)"/><use href="#sf48" transform="translate(364.50 246.50) scale(1.0 1.0)"/></g>
<g stroke="#ffffff" color="#ffffff" fill="none" stroke-width="1.0" stroke-linecap="square" shape-rendering="geometricPrecision"><use href="#sf67" transform="translate(334.50 254.50) scale(1.0 1.2857142857142858)"/><use href="#sf79" transform="translate(347.50 254.50) scale(1.0 1.2857142857142858)"/><use href="#sf77" transform="translate(359.50 254.50) scale(1.0 1.2857142857142858)"/><use href="#sf49" transform="translate(372.50 254.50) scale(1.0 1.2857142857142858)"/></g>
<g stroke="#ffff00" color="#ffff00" fill="none" stroke-width="1.0" stroke-linecap="square" shape-rendering="geometricPrecision"><use href="#sf57" transform="translate(353.50 276.50) scale(1.0 1.0)"/></g>
<g stroke="#ffffff" fill="none" stroke-width="1" stroke-linecap="square"><use href="#sf65" transform="translate(157.50 325.50) rotate(-90) scale(1.0 1.25)"/></g>
<g stroke="#ffffff" fill="none" stroke-width="1" stroke-linecap="square"><use href="#sf66" transform="translate(178.50 325.50) rotate(-90) scale(1.0 1.25)"/></g>
<g stroke="#ffffff" fill="none" stroke-width="1" stroke-linecap="square"><use href="#sf67" transform="translate(200.50 325.50) rotate(-90) scale(1.0 1.25)"/></g>
<g stroke="#ffffff" fill="none" stroke-width="1" stroke-linecap="square"><use href="#sf68" transform="translate(221.50 325.50) rotate(-90) scale(1.0 1.25)"/></g>
<g stroke="#ffffff" fill="none" stroke-width="1" stroke-linecap="square"><use href="#sf69" transform="translate(242.50 325.50) rotate(-90) scale(1.0 1.25)"/></g>
<g stroke="#ffffff" fill="none" stroke-width="1" stroke-linecap="square"><use href="#sf70" transform="translate(263.50 325.50) rotate(-90) scale(1.0 1.25)"/></g>
<g stroke="#ffffff" fill="none" stroke-width="1" stroke-linecap="square"><use href="#sf71" transform="translate(284.50 325.50) rotate(-90) scale(1.0 1.25)"/></g>
<g stroke="#ffffff" fill="none" stroke-width="1" stroke-linecap="square"><use href="#sf68" transform="translate(306.50 325.50) rotate(-90) scale(1.0 1.25)"/></g>
<g stroke="#ffffff" fill="none" stroke-width="1" stroke-linecap="square"><use href="#sf66" transform="translate(307.50 312.50) rotate(-90) scale(1.0 1.25)"/></g>
<g stroke="#ffff00" color="#ffff00" fill="none" stroke-width="1.0" stroke-linecap="square" shape-rendering="geometricPrecision"><use href="#sf80" transform="translate(152.50 340.50) scale(1.0 1.0)"/><use href="#sf65" transform="translate(163.50 340.50) scale(1.0 1.0)"/><use href="#sf82" transform="translate(173.50 340.50) scale(1.0 1.0)"/><use href="#sf84" transform="translate(184.50 340.50) scale(1.0 1.0)"/><use href="#sf95" transform="translate(194.50 340.50) scale(1.0 1.0)"/><use href="#sf78" transform="translate(205.50 340.50) scale(1.0 1.0)"/><use href="#sf65" transform="translate(216.50 340.50) scale(1.0 1.0)"/><use href="#sf77" transform="translate(226.50 340.50) scale(1.0 1.0)"/><use href="#sf69" transform="translate(237.50 340.50) scale(1.0 1.0)"/><rect x="249.00" y="343.00" width="4.00" height="2" fill="#ffff00" stroke="none"/><use href="#sf68" transform="translate(258.50 340.50) scale(1.0 1.0)"/><use href="#sf80" transform="translate(269.50 340.50) scale(1.0 1.0)"/><use href="#sf89" transform="translate(279.50 340.50) scale(1.0 1.0)"/><use href="#sf45" transform="translate(290.50 340.50) scale(1.0 1.0)"/><use href="#sf55" transform="translate(301.50 340.50) scale(1.0 1.0)"/><use href="#sf45" transform="translate(311.50 340.50) scale(1.0 1.0)"/><use href="#sf83" transform="translate(322.50 340.50) scale(1.0 1.0)"/><use href="#sf69" transform="translate(332.50 340.50) scale(1.0 1.0)"/><use href="#sf71" transform="translate(343.50 340.50) scale(1.0 1.0)"/><use href="#sf45" transform="translate(354.50 340.50) scale(1.0 1.0)"/><use href="#sf68" transform="translate(364.50 340.50) scale(1.0 1.0)"/><use href="#sf80" transform="translate(375.50 340.50) scale(1.0 1.0)"/></g>
<g stroke="#ffff00" color="#ffff00" fill="none" stroke-width="1.0" stroke-linecap="square" shape-rendering="geometricPrecision"><use href="#sf80" transform="translate(152.50 351.50) scale(1.0 1.0)"/><use href="#sf65" transform="translate(163.50 351.50) scale(1.0 1.0)"/><use href="#sf82" transform="translate(173.50 351.50) scale(1.0 1.0)"/><use href="#sf84" transform="translate(184.50 351.50) scale(1.0 1.0)"/><use href="#sf95" transform="translate(194.50 351.50) scale(1.0 1.0)"/><use href="#sf76" transform="translate(205.50 351.50) scale(1.0 1.0)"/><use href="#sf65" transform="translate(216.50 351.50) scale(1.0 1.0)"/><use href="#sf66" transform="translate(226.50 351.50) scale(1.0 1.0)"/><use href="#sf69" transform="translate(237.50 351.50) scale(1.0 1.0)"/><use href="#sf76" transform="translate(248.50 351.50) scale(1.0 1.0)"/><rect x="259.00" y="354.00" width="4.00" height="2" fill="#ffff00" stroke="none"/></g>
<g stroke="#ffff00" color="#ffff00" fill="none" stroke-width="1.0" stroke-linecap="square" shape-rendering="geometricPrecision"><use href="#sf49" transform="translate(173.50 340.50) scale(1.0 1.0)"/></g>
<g stroke="#ffff00" color="#ffff00" fill="none" stroke-width="1.0" stroke-linecap="square" shape-rendering="geometricPrecision"><use href="#sf50" transform="translate(194.50 340.50) scale(1.0 1.0)"/></g>
<g stroke="#ffff00" color="#ffff00" fill="none" stroke-width="1.0" stroke-linecap="square" shape-rendering="geometricPrecision"><use href="#sf51" transform="translate(216.50 340.50) scale(1.0 1.0)"/></g>
<g stroke="#ffff00" color="#ffff00" fill="none" stroke-width="1.0" stroke-linecap="square" shape-rendering="geometricPrecision"><use href="#sf52" transform="translate(237.50 340.50) scale(1.0 1.0)"/></g>
<g stroke="#ffff00" color="#ffff00" fill="none" stroke-width="1.0" stroke-linecap="square" shape-rendering="geometricPrecision"><use href="#sf53" transform="translate(258.50 340.50) scale(1.0 1.0)"/></g>
<g stroke="#ffff00" color="#ffff00" fill="none" stroke-width="1.0" stroke-linecap="square" shape-rendering="geometricPrecision"><use href="#sf54" transform="translate(279.50 340.50) scale(1.0 1.0)"/></g>
<g stroke="#ffff00" color="#ffff00" fill="none" stroke-width="1.0" stroke-linecap="square" shape-rendering="geometricPrecision"><use href="#sf55" transform="translate(301.50 340.50) scale(1.0 1.0)"/></g>
<g stroke="#ffff00" color="#ffff00" fill="none" stroke-width="1.0" stroke-linecap="square" shape-rendering="geometricPrecision"><use href="#sf56" transform="translate(322.50 340.50) scale(1.0 1.0)"/></g>
<g stroke="#ffff00" color="#ffff00" fill="none" stroke-width="1.0" stroke-linecap="square" shape-rendering="geometricPrecision"><use href="#sf68" transform="translate(152.50 414.50) scale(1.0 1.0)"/><use href="#sf80" transform="translate(163.50 414.50) scale(1.0 1.0)"/><use href="#sf89" transform="translate(173.50 414.50) scale(1.0 1.0)"/><use href="#sf45" transform="translate(184.50 414.50) scale(1.0 1.0)"/><use href="#sf55" transform="translate(194.50 414.50) scale(1.0 1.0)"/><use href="#sf45" transform="translate(205.50 414.50) scale(1.0 1.0)"/><use href="#sf83" transform="translate(216.50 414.50) scale(1.0 1.0)"/><use href="#sf69" transform="translate(226.50 414.50) scale(1.0 1.0)"/><use href="#sf71" transform="translate(237.50 414.50) scale(1.0 1.0)"/><use href="#sf45" transform="translate(248.50 414.50) scale(1.0 1.0)"/><use href="#sf68" transform="translate(258.50 414.50) scale(1.0 1.0)"/><use href="#sf80" transform="translate(269.50 414.50) scale(1.0 1.0)"/></g>
<g stroke="#ffff00" color="#ffff00" fill="none" stroke-width="1.0" stroke-linecap="square" shape-rendering="geometricPrecision"><use href="#sf49" transform="translate(173.50 414.50) scale(1.0 1.0)"/></g>
<g stroke="#ffff00" color="#ffff00" fill="none" stroke-width="1.0" stroke-linecap="square" shape-rendering="geometricPrecision"><use href="#sf50" transform="translate(194.50 414.50) scale(1.0 1.0)"/></g>
<g stroke="#ffff00" color="#ffff00" fill="none" stroke-width="1.0" stroke-linecap="square" shape-rendering="geometricPrecision"><use href="#sf51" transform="translate(216.50 414.50) scale(1.0 1.0)"/></g>
<g stroke="#ffff00" color="#ffff00" fill="none" stroke-width="1.0" stroke-linecap="square" shape-rendering="geometricPrecision"><use href="#sf52" transform="translate(237.50 414.50) scale(1.0 1.0)"/></g>
<g stroke="#ffff00" color="#ffff00" fill="none" stroke-width="1.0" stroke-linecap="square" shape-rendering="geometricPrecision"><use href="#sf53" transform="translate(258.50 414.50) scale(1.0 1.0)"/></g>
<g stroke="#ffff00" color="#ffff00" fill="none" stroke-width="1.0" stroke-linecap="square" shape-rendering="geometricPrecision"><use href="#sf54" transform="translate(279.50 414.50) scale(1.0 1.0)"/></g>
<g stroke="#ffff00" color="#ffff00" fill="none" stroke-width="1.0" stroke-linecap="square" shape-rendering="geometricPrecision"><use href="#sf55" transform="translate(301.50 414.50) scale(1.0 1.0)"/></g>
<g stroke="#ffff00" color="#ffff00" fill="none" stroke-width="1.0" stroke-linecap="square" shape-rendering="geometricPrecision"><use href="#sf56" transform="translate(322.50 414.50) scale(1.0 1.0)"/></g>
<g stroke="#ffffff" fill="none" stroke-width="1" stroke-linecap="square"><use href="#sf65" transform="translate(157.50 445.50) rotate(-90) scale(1.0 1.25)"/></g>
<g stroke="#ffffff" fill="none" stroke-width="1" stroke-linecap="square"><use href="#sf66" transform="translate(178.50 445.50) rotate(-90) scale(1.0 1.25)"/></g>
<g stroke="#ffffff" fill="none" stroke-width="1" stroke-linecap="square"><use href="#sf67" transform="translate(200.50 445.50) rotate(-90) scale(1.0 1.25)"/></g>
<g stroke="#ffffff" fill="none" stroke-width="1" stroke-linecap="square"><use href="#sf68" transform="translate(221.50 445.50) rotate(-90) scale(1.0 1.25)"/></g>
<g stroke="#ffffff" fill="none" stroke-width="1" stroke-linecap="square"><use href="#sf69" transform="translate(242.50 445.50) rotate(-90) scale(1.0 1.25)"/></g>
<g stroke="#ffffff" fill="none" stroke-width="1" stroke-linecap="square"><use href="#sf70" transform="translate(263.50 445.50) rotate(-90) scale(1.0 1.25)"/></g>
<g stroke="#ffffff" fill="none" stroke-width="1" stroke-linecap="square"><use href="#sf71" transform="translate(284.50 445.50) rotate(-90) scale(1.0 1.25)"/></g>
<g stroke="#ffffff" fill="none" stroke-width="1" stroke-linecap="square"><use href="#sf66" transform="translate(307.50 445.50) rotate(-90) scale(1.0 1.25)"/></g>
<rect x="159" y="445" width="171" height="1" fill="#008c00"/>
<g stroke="#ffffff" fill="none" stroke-width="1" stroke-linecap="square"><use href="#sf68" transform="translate(307.50 456.50) rotate(-90) scale(1.0 1.25)"/></g>
<g stroke="#ffff00" color="#ffff00" fill="none" stroke-width="1.0" stroke-linecap="square" shape-rendering="geometricPrecision"><use href="#sf57" transform="translate(353.50 478.50) scale(1.0 1.0)"/></g>
<g stroke="#ffffff" color="#ffffff" fill="none" stroke-width="1.0" stroke-linecap="square" shape-rendering="geometricPrecision"><use href="#sf67" transform="translate(334.50 498.50) scale(1.0 1.2857142857142858)"/><use href="#sf79" transform="translate(347.50 498.50) scale(1.0 1.2857142857142858)"/><use href="#sf77" transform="translate(359.50 498.50) scale(1.0 1.2857142857142858)"/><use href="#sf49" transform="translate(372.50 498.50) scale(1.0 1.2857142857142858)"/></g>
<g stroke="#ffff00" color="#ffff00" fill="none" stroke-width="1.0" stroke-linecap="square" shape-rendering="geometricPrecision"><use href="#sf49" transform="translate(353.50 510.50) scale(1.0 1.0)"/><use href="#sf48" transform="translate(364.50 510.50) scale(1.0 1.0)"/></g>
<g stroke="#ffffff" color="#ffffff" fill="none" stroke-width="1.0" stroke-linecap="square" shape-rendering="geometricPrecision"><use href="#sf67" transform="translate(334.50 534.50) scale(1.0 1.2857142857142858)"/><use href="#sf79" transform="translate(347.50 534.50) scale(1.0 1.2857142857142858)"/><use href="#sf77" transform="translate(359.50 534.50) scale(1.0 1.2857142857142858)"/><use href="#sf50" transform="translate(372.50 534.50) scale(1.0 1.2857142857142858)"/></g>
<g stroke="#ffffff" color="#ffffff" fill="none" stroke-width="1.0" stroke-linecap="square" shape-rendering="geometricPrecision"><use href="#sf88" transform="translate(173.50 574.50) scale(1.0 1.0)"/><use href="#sf49" transform="translate(184.50 574.50) scale(1.0 1.0)"/><use href="#sf73" transform="translate(194.50 574.50) scale(1.0 1.0)"/><use href="#sf49" transform="translate(205.50 574.50) scale(1.0 1.0)"/><use href="#sf57" transform="translate(216.50 574.50) scale(1.0 1.0)"/><use href="#sf48" transform="translate(226.50 574.50) scale(1.0 1.0)"/></g>
<g stroke="#ffff00" color="#ffff00" fill="none" stroke-width="1.0" stroke-linecap="square" shape-rendering="geometricPrecision"><use href="#sf68" transform="translate(237.50 574.50) scale(1.0 1.0)"/><use href="#sf80" transform="translate(248.50 574.50) scale(1.0 1.0)"/><use href="#sf89" transform="translate(258.50 574.50) scale(1.0 1.0)"/><use href="#sf45" transform="translate(269.50 574.50) scale(1.0 1.0)"/><use href="#sf55" transform="translate(280.50 574.50) scale(1.0 1.0)"/><use href="#sf45" transform="translate(290.50 574.50) scale(1.0 1.0)"/><use href="#sf53" transform="translate(301.50 574.50) scale(1.0 1.0)"/><use href="#sf69" transform="translate(312.50 574.50) scale(1.0 1.0)"/><use href="#sf71" transform="translate(323.50 574.50) scale(1.0 1.0)"/><use href="#sf45" transform="translate(333.50 574.50) scale(1.0 1.0)"/><use href="#sf68" transform="translate(344.50 574.50) scale(1.0 1.0)"/><use href="#sf80" transform="translate(355.50 574.50) scale(1.0 1.0)"/></g>
<g stroke="#ffff00" color="#ffff00" fill="none" stroke-width="1.0" stroke-linecap="square" shape-rendering="geometricPrecision"><use href="#sf80" transform="translate(152.50 585.50) scale(1.0 1.0)"/><use href="#sf65" transform="translate(163.50 585.50) scale(1.0 1.0)"/><use href="#sf82" transform="translate(173.50 585.50) scale(1.0 1.0)"/><use href="#sf84" transform="translate(184.50 585.50) scale(1.0 1.0)"/><use href="#sf95" transform="translate(194.50 585.50) scale(1.0 1.0)"/><use href="#sf78" transform="translate(205.50 585.50) scale(1.0 1.0)"/><use href="#sf65" transform="translate(216.50 585.50) scale(1.0 1.0)"/><use href="#sf77" transform="translate(226.50 585.50) scale(1.0 1.0)"/><use href="#sf69" transform="translate(237.50 585.50) scale(1.0 1.0)"/><rect x="249.00" y="588.00" width="4.00" height="2" fill="#ffff00" stroke="none"/><use href="#sf68" transform="translate(258.50 585.50) scale(1.0 1.0)"/><use href="#sf80" transform="translate(269.50 585.50) scale(1.0 1.0)"/><use href="#sf89" transform="translate(279.50 585.50) scale(1.0 1.0)"/><use href="#sf45" transform="translate(290.50 585.50) scale(1.0 1.0)"/><use href="#sf55" transform="translate(301.50 585.50) scale(1.0 1.0)"/><use href="#sf45" transform="translate(311.50 585.50) scale(1.0 1.0)"/><use href="#sf53" transform="translate(322.50 585.50) scale(1.0 1.0)"/><use href="#sf69" transform="translate(332.50 585.50) scale(1.0 1.0)"/><use href="#sf71" transform="translate(343.50 585.50) scale(1.0 1.0)"/><use href="#sf45" transform="translate(354.50 585.50) scale(1.0 1.0)"/><use href="#sf68" transform="translate(364.50 585.50) scale(1.0 1.0)"/><use href="#sf80" transform="translate(375.50 585.50) scale(1.0 1.0)"/></g>
<g stroke="#ffff00" color="#ffff00" fill="none" stroke-width="1.0" stroke-linecap="square" shape-rendering="geometricPrecision"><use href="#sf82" transform="translate(163.50 591.50) scale(0.72 0.62)"/><use href="#sf69" transform="translate(168.50 591.50) scale(0.72 0.62)"/><use href="#sf70" transform="translate(172.50 591.50) scale(0.72 0.62)"/><use href="#sf68" transform="translate(182.50 591.50) scale(0.72 0.62)"/><use href="#sf69" transform="translate(186.50 591.50) scale(0.72 0.62)"/><use href="#sf83" transform="translate(191.50 591.50) scale(0.72 0.62)"/><use href="#sf45" transform="translate(196.50 591.50) scale(0.72 0.62)"/><use href="#sf76" transform="translate(201.50 591.50) scale(0.72 0.62)"/><use href="#sf69" transform="translate(205.50 591.50) scale(0.72 0.62)"/><use href="#sf68" transform="translate(210.50 591.50) scale(0.72 0.62)"/><use href="#sf49" transform="translate(215.50 591.50) scale(0.72 0.62)"/></g>
<g stroke="#ffff00" color="#ffff00" fill="none" stroke-width="1.0" stroke-linecap="square" shape-rendering="geometricPrecision"><use href="#sf80" transform="translate(152.50 596.50) scale(1.0 1.0)"/><use href="#sf65" transform="translate(163.50 596.50) scale(1.0 1.0)"/><use href="#sf82" transform="translate(173.50 596.50) scale(1.0 1.0)"/><use href="#sf84" transform="translate(184.50 596.50) scale(1.0 1.0)"/><use href="#sf95" transform="translate(194.50 596.50) scale(1.0 1.0)"/><use href="#sf76" transform="translate(205.50 596.50) scale(1.0 1.0)"/><use href="#sf65" transform="translate(216.50 596.50) scale(1.0 1.0)"/><use href="#sf66" transform="translate(226.50 596.50) scale(1.0 1.0)"/><use href="#sf69" transform="translate(237.50 596.50) scale(1.0 1.0)"/><use href="#sf76" transform="translate(248.50 596.50) scale(1.0 1.0)"/><rect x="259.00" y="599.00" width="4.00" height="2" fill="#ffff00" stroke="none"/></g>
<g stroke="#ffffff" color="#ffffff" fill="none" stroke-width="1.0" stroke-linecap="square" shape-rendering="geometricPrecision"><use href="#sf88" transform="translate(417.50 160.50) scale(1.0 1.0)"/><use href="#sf49" transform="translate(428.50 160.50) scale(1.0 1.0)"/><use href="#sf73" transform="translate(438.50 160.50) scale(1.0 1.0)"/><use href="#sf49" transform="translate(449.50 160.50) scale(1.0 1.0)"/><use href="#sf57" transform="translate(460.50 160.50) scale(1.0 1.0)"/><use href="#sf51" transform="translate(470.50 160.50) scale(1.0 1.0)"/></g>
<g stroke="#ffff00" color="#ffff00" fill="none" stroke-width="1.0" stroke-linecap="square" shape-rendering="geometricPrecision"><use href="#sf82" transform="translate(418.50 166.50) scale(0.72 0.62)"/><use href="#sf69" transform="translate(423.50 166.50) scale(0.72 0.62)"/><use href="#sf70" transform="translate(427.50 166.50) scale(0.72 0.62)"/><use href="#sf68" transform="translate(437.50 166.50) scale(0.72 0.62)"/><use href="#sf69" transform="translate(442.50 166.50) scale(0.72 0.62)"/><use href="#sf83" transform="translate(446.50 166.50) scale(0.72 0.62)"/><use href="#sf45" transform="translate(451.50 166.50) scale(0.72 0.62)"/><use href="#sf76" transform="translate(456.50 166.50) scale(0.72 0.62)"/><use href="#sf69" transform="translate(460.50 166.50) scale(0.72 0.62)"/><use href="#sf68" transform="translate(465.50 166.50) scale(0.72 0.62)"/><use href="#sf51" transform="translate(470.50 166.50) scale(0.72 0.62)"/></g>
<g stroke="#ffffff" color="#ffffff" fill="none" stroke-width="1.0" stroke-linecap="square" shape-rendering="geometricPrecision"><use href="#sf67" transform="translate(589.50 218.50) scale(1.0 1.2857142857142858)"/><use href="#sf79" transform="translate(602.50 218.50) scale(1.0 1.2857142857142858)"/><use href="#sf77" transform="translate(614.50 218.50) scale(1.0 1.2857142857142858)"/><use href="#sf50" transform="translate(627.50 218.50) scale(1.0 1.2857142857142858)"/></g>
<g stroke="#ffff00" color="#ffff00" fill="none" stroke-width="1.0" stroke-linecap="square" shape-rendering="geometricPrecision"><use href="#sf49" transform="translate(608.50 246.50) scale(1.0 1.0)"/><use href="#sf48" transform="translate(619.50 246.50) scale(1.0 1.0)"/></g>
<g stroke="#ffffff" color="#ffffff" fill="none" stroke-width="1.0" stroke-linecap="square" shape-rendering="geometricPrecision"><use href="#sf67" transform="translate(589.50 254.50) scale(1.0 1.2857142857142858)"/><use href="#sf79" transform="translate(602.50 254.50) scale(1.0 1.2857142857142858)"/><use href="#sf77" transform="translate(614.50 254.50) scale(1.0 1.2857142857142858)"/><use href="#sf49" transform="translate(627.50 254.50) scale(1.0 1.2857142857142858)"/></g>
<g stroke="#ffff00" color="#ffff00" fill="none" stroke-width="1.0" stroke-linecap="square" shape-rendering="geometricPrecision"><use href="#sf57" transform="translate(608.50 276.50) scale(1.0 1.0)"/></g>
<g stroke="#ffffff" fill="none" stroke-width="1" stroke-linecap="square"><use href="#sf65" transform="translate(412.50 325.50) rotate(-90) scale(1.0 1.25)"/></g>
<g stroke="#ffffff" fill="none" stroke-width="1" stroke-linecap="square"><use href="#sf66" transform="translate(433.50 325.50) rotate(-90) scale(1.0 1.25)"/></g>
<g stroke="#ffffff" fill="none" stroke-width="1" stroke-linecap="square"><use href="#sf67" transform="translate(454.50 325.50) rotate(-90) scale(1.0 1.25)"/></g>
<g stroke="#ffffff" fill="none" stroke-width="1" stroke-linecap="square"><use href="#sf68" transform="translate(475.50 325.50) rotate(-90) scale(1.0 1.25)"/></g>
<g stroke="#ffffff" fill="none" stroke-width="1" stroke-linecap="square"><use href="#sf69" transform="translate(497.50 325.50) rotate(-90) scale(1.0 1.25)"/></g>
<g stroke="#ffffff" fill="none" stroke-width="1" stroke-linecap="square"><use href="#sf70" transform="translate(518.50 325.50) rotate(-90) scale(1.0 1.25)"/></g>
<g stroke="#ffffff" fill="none" stroke-width="1" stroke-linecap="square"><use href="#sf71" transform="translate(539.50 325.50) rotate(-90) scale(1.0 1.25)"/></g>
<g stroke="#ffffff" fill="none" stroke-width="1" stroke-linecap="square"><use href="#sf68" transform="translate(560.50 325.50) rotate(-90) scale(1.0 1.25)"/></g>
<g stroke="#ffffff" fill="none" stroke-width="1" stroke-linecap="square"><use href="#sf66" transform="translate(562.50 312.50) rotate(-90) scale(1.0 1.25)"/></g>
<g stroke="#ffff00" color="#ffff00" fill="none" stroke-width="1.0" stroke-linecap="square" shape-rendering="geometricPrecision"><use href="#sf80" transform="translate(407.50 340.50) scale(1.0 1.0)"/><use href="#sf65" transform="translate(418.50 340.50) scale(1.0 1.0)"/><use href="#sf82" transform="translate(428.50 340.50) scale(1.0 1.0)"/><use href="#sf84" transform="translate(439.50 340.50) scale(1.0 1.0)"/><use href="#sf95" transform="translate(449.50 340.50) scale(1.0 1.0)"/><use href="#sf78" transform="translate(460.50 340.50) scale(1.0 1.0)"/><use href="#sf65" transform="translate(471.50 340.50) scale(1.0 1.0)"/><use href="#sf77" transform="translate(481.50 340.50) scale(1.0 1.0)"/><use href="#sf69" transform="translate(492.50 340.50) scale(1.0 1.0)"/><rect x="504.00" y="343.00" width="4.00" height="2" fill="#ffff00" stroke="none"/><use href="#sf68" transform="translate(513.50 340.50) scale(1.0 1.0)"/><use href="#sf80" transform="translate(524.50 340.50) scale(1.0 1.0)"/><use href="#sf89" transform="translate(534.50 340.50) scale(1.0 1.0)"/><use href="#sf45" transform="translate(545.50 340.50) scale(1.0 1.0)"/><use href="#sf55" transform="translate(556.50 340.50) scale(1.0 1.0)"/><use href="#sf45" transform="translate(566.50 340.50) scale(1.0 1.0)"/><use href="#sf83" transform="translate(577.50 340.50) scale(1.0 1.0)"/><use href="#sf69" transform="translate(587.50 340.50) scale(1.0 1.0)"/><use href="#sf71" transform="translate(598.50 340.50) scale(1.0 1.0)"/><use href="#sf45" transform="translate(609.50 340.50) scale(1.0 1.0)"/><use href="#sf68" transform="translate(619.50 340.50) scale(1.0 1.0)"/><use href="#sf80" transform="translate(630.50 340.50) scale(1.0 1.0)"/></g>
<g stroke="#ffff00" color="#ffff00" fill="none" stroke-width="1.0" stroke-linecap="square" shape-rendering="geometricPrecision"><use href="#sf80" transform="translate(407.50 351.50) scale(1.0 1.0)"/><use href="#sf65" transform="translate(418.50 351.50) scale(1.0 1.0)"/><use href="#sf82" transform="translate(428.50 351.50) scale(1.0 1.0)"/><use href="#sf84" transform="translate(439.50 351.50) scale(1.0 1.0)"/><use href="#sf95" transform="translate(449.50 351.50) scale(1.0 1.0)"/><use href="#sf76" transform="translate(460.50 351.50) scale(1.0 1.0)"/><use href="#sf65" transform="translate(471.50 351.50) scale(1.0 1.0)"/><use href="#sf66" transform="translate(481.50 351.50) scale(1.0 1.0)"/><use href="#sf69" transform="translate(492.50 351.50) scale(1.0 1.0)"/><use href="#sf76" transform="translate(503.50 351.50) scale(1.0 1.0)"/><rect x="514.00" y="354.00" width="4.00" height="2" fill="#ffff00" stroke="none"/></g>
<g stroke="#ffff00" color="#ffff00" fill="none" stroke-width="1.0" stroke-linecap="square" shape-rendering="geometricPrecision"><use href="#sf49" transform="translate(428.50 340.50) scale(1.0 1.0)"/></g>
<g stroke="#ffff00" color="#ffff00" fill="none" stroke-width="1.0" stroke-linecap="square" shape-rendering="geometricPrecision"><use href="#sf50" transform="translate(449.50 340.50) scale(1.0 1.0)"/></g>
<g stroke="#ffff00" color="#ffff00" fill="none" stroke-width="1.0" stroke-linecap="square" shape-rendering="geometricPrecision"><use href="#sf51" transform="translate(470.50 340.50) scale(1.0 1.0)"/></g>
<g stroke="#ffff00" color="#ffff00" fill="none" stroke-width="1.0" stroke-linecap="square" shape-rendering="geometricPrecision"><use href="#sf52" transform="translate(492.50 340.50) scale(1.0 1.0)"/></g>
<g stroke="#ffff00" color="#ffff00" fill="none" stroke-width="1.0" stroke-linecap="square" shape-rendering="geometricPrecision"><use href="#sf53" transform="translate(513.50 340.50) scale(1.0 1.0)"/></g>
<g stroke="#ffff00" color="#ffff00" fill="none" stroke-width="1.0" stroke-linecap="square" shape-rendering="geometricPrecision"><use href="#sf54" transform="translate(534.50 340.50) scale(1.0 1.0)"/></g>
<g stroke="#ffff00" color="#ffff00" fill="none" stroke-width="1.0" stroke-linecap="square" shape-rendering="geometricPrecision"><use href="#sf55" transform="translate(555.50 340.50) scale(1.0 1.0)"/></g>
<g stroke="#ffff00" color="#ffff00" fill="none" stroke-width="1.0" stroke-linecap="square" shape-rendering="geometricPrecision"><use href="#sf56" transform="translate(576.50 340.50) scale(1.0 1.0)"/></g>
<g stroke="#ffff00" color="#ffff00" fill="none" stroke-width="1.0" stroke-linecap="square" shape-rendering="geometricPrecision"><use href="#sf68" transform="translate(407.50 414.50) scale(1.0 1.0)"/><use href="#sf80" transform="translate(418.50 414.50) scale(1.0 1.0)"/><use href="#sf89" transform="translate(428.50 414.50) scale(1.0 1.0)"/><use href="#sf45" transform="translate(439.50 414.50) scale(1.0 1.0)"/><use href="#sf55" transform="translate(449.50 414.50) scale(1.0 1.0)"/><use href="#sf45" transform="translate(460.50 414.50) scale(1.0 1.0)"/><use href="#sf83" transform="translate(471.50 414.50) scale(1.0 1.0)"/><use href="#sf69" transform="translate(481.50 414.50) scale(1.0 1.0)"/><use href="#sf71" transform="translate(492.50 414.50) scale(1.0 1.0)"/><use href="#sf45" transform="translate(503.50 414.50) scale(1.0 1.0)"/><use href="#sf68" transform="translate(513.50 414.50) scale(1.0 1.0)"/><use href="#sf80" transform="translate(524.50 414.50) scale(1.0 1.0)"/></g>
<g stroke="#ffff00" color="#ffff00" fill="none" stroke-width="1.0" stroke-linecap="square" shape-rendering="geometricPrecision"><use href="#sf49" transform="translate(428.50 414.50) scale(1.0 1.0)"/></g>
<g stroke="#ffff00" color="#ffff00" fill="none" stroke-width="1.0" stroke-linecap="square" shape-rendering="geometricPrecision"><use href="#sf50" transform="translate(449.50 414.50) scale(1.0 1.0)"/></g>
<g stroke="#ffff00" color="#ffff00" fill="none" stroke-width="1.0" stroke-linecap="square" shape-rendering="geometricPrecision"><use href="#sf51" transform="translate(470.50 414.50) scale(1.0 1.0)"/></g>
<g stroke="#ffff00" color="#ffff00" fill="none" stroke-width="1.0" stroke-linecap="square" shape-rendering="geometricPrecision"><use href="#sf52" transform="translate(492.50 414.50) scale(1.0 1.0)"/></g>
<g stroke="#ffff00" color="#ffff00" fill="none" stroke-width="1.0" stroke-linecap="square" shape-rendering="geometricPrecision"><use href="#sf53" transform="translate(513.50 414.50) scale(1.0 1.0)"/></g>
<g stroke="#ffff00" color="#ffff00" fill="none" stroke-width="1.0" stroke-linecap="square" shape-rendering="geometricPrecision"><use href="#sf54" transform="translate(534.50 414.50) scale(1.0 1.0)"/></g>
<g stroke="#ffff00" color="#ffff00" fill="none" stroke-width="1.0" stroke-linecap="square" shape-rendering="geometricPrecision"><use href="#sf55" transform="translate(555.50 414.50) scale(1.0 1.0)"/></g>
<g stroke="#ffff00" color="#ffff00" fill="none" stroke-width="1.0" stroke-linecap="square" shape-rendering="geometricPrecision"><use href="#sf56" transform="translate(576.50 414.50) scale(1.0 1.0)"/></g>
<g stroke="#ffffff" fill="none" stroke-width="1" stroke-linecap="square"><use href="#sf65" transform="translate(412.50 445.50) rotate(-90) scale(1.0 1.25)"/></g>
<g stroke="#ffffff" fill="none" stroke-width="1" stroke-linecap="square"><use href="#sf66" transform="translate(433.50 445.50) rotate(-90) scale(1.0 1.25)"/></g>
<g stroke="#ffffff" fill="none" stroke-width="1" stroke-linecap="square"><use href="#sf67" transform="translate(454.50 445.50) rotate(-90) scale(1.0 1.25)"/></g>
<g stroke="#ffffff" fill="none" stroke-width="1" stroke-linecap="square"><use href="#sf68" transform="translate(475.50 445.50) rotate(-90) scale(1.0 1.25)"/></g>
<g stroke="#ffffff" fill="none" stroke-width="1" stroke-linecap="square"><use href="#sf69" transform="translate(497.50 445.50) rotate(-90) scale(1.0 1.25)"/></g>
<g stroke="#ffffff" fill="none" stroke-width="1" stroke-linecap="square"><use href="#sf70" transform="translate(518.50 445.50) rotate(-90) scale(1.0 1.25)"/></g>
<g stroke="#ffffff" fill="none" stroke-width="1" stroke-linecap="square"><use href="#sf71" transform="translate(539.50 445.50) rotate(-90) scale(1.0 1.25)"/></g>
<g stroke="#ffffff" fill="none" stroke-width="1" stroke-linecap="square"><use href="#sf66" transform="translate(562.50 445.50) rotate(-90) scale(1.0 1.25)"/></g>
<rect x="414" y="445" width="171" height="1" fill="#008c00"/>
<g stroke="#ffffff" fill="none" stroke-width="1" stroke-linecap="square"><use href="#sf68" transform="translate(562.50 456.50) rotate(-90) scale(1.0 1.25)"/></g>
<g stroke="#ffff00" color="#ffff00" fill="none" stroke-width="1.0" stroke-linecap="square" shape-rendering="geometricPrecision"><use href="#sf57" transform="translate(608.50 478.50) scale(1.0 1.0)"/></g>
<g stroke="#ffffff" color="#ffffff" fill="none" stroke-width="1.0" stroke-linecap="square" shape-rendering="geometricPrecision"><use href="#sf67" transform="translate(589.50 498.50) scale(1.0 1.2857142857142858)"/><use href="#sf79" transform="translate(602.50 498.50) scale(1.0 1.2857142857142858)"/><use href="#sf77" transform="translate(614.50 498.50) scale(1.0 1.2857142857142858)"/><use href="#sf49" transform="translate(627.50 498.50) scale(1.0 1.2857142857142858)"/></g>
<g stroke="#ffff00" color="#ffff00" fill="none" stroke-width="1.0" stroke-linecap="square" shape-rendering="geometricPrecision"><use href="#sf49" transform="translate(608.50 510.50) scale(1.0 1.0)"/><use href="#sf48" transform="translate(619.50 510.50) scale(1.0 1.0)"/></g>
<g stroke="#ffffff" color="#ffffff" fill="none" stroke-width="1.0" stroke-linecap="square" shape-rendering="geometricPrecision"><use href="#sf67" transform="translate(589.50 534.50) scale(1.0 1.2857142857142858)"/><use href="#sf79" transform="translate(602.50 534.50) scale(1.0 1.2857142857142858)"/><use href="#sf77" transform="translate(614.50 534.50) scale(1.0 1.2857142857142858)"/><use href="#sf50" transform="translate(627.50 534.50) scale(1.0 1.2857142857142858)"/></g>
<g stroke="#ffff00" color="#ffff00" fill="none" stroke-width="1.0" stroke-linecap="square" shape-rendering="geometricPrecision"><use href="#sf80" transform="translate(407.50 585.50) scale(1.0 1.0)"/><use href="#sf65" transform="translate(418.50 585.50) scale(1.0 1.0)"/><use href="#sf82" transform="translate(428.50 585.50) scale(1.0 1.0)"/><use href="#sf84" transform="translate(439.50 585.50) scale(1.0 1.0)"/><use href="#sf95" transform="translate(449.50 585.50) scale(1.0 1.0)"/><use href="#sf78" transform="translate(460.50 585.50) scale(1.0 1.0)"/><use href="#sf65" transform="translate(471.50 585.50) scale(1.0 1.0)"/><use href="#sf77" transform="translate(481.50 585.50) scale(1.0 1.0)"/><use href="#sf69" transform="translate(492.50 585.50) scale(1.0 1.0)"/><rect x="504.00" y="588.00" width="4.00" height="2" fill="#ffff00" stroke="none"/><use href="#sf68" transform="translate(513.50 585.50) scale(1.0 1.0)"/><use href="#sf80" transform="translate(524.50 585.50) scale(1.0 1.0)"/><use href="#sf89" transform="translate(534.50 585.50) scale(1.0 1.0)"/><use href="#sf45" transform="translate(545.50 585.50) scale(1.0 1.0)"/><use href="#sf55" transform="translate(556.50 585.50) scale(1.0 1.0)"/><use href="#sf45" transform="translate(566.50 585.50) scale(1.0 1.0)"/><use href="#sf53" transform="translate(577.50 585.50) scale(1.0 1.0)"/><use href="#sf69" transform="translate(587.50 585.50) scale(1.0 1.0)"/><use href="#sf71" transform="translate(598.50 585.50) scale(1.0 1.0)"/><use href="#sf45" transform="translate(609.50 585.50) scale(1.0 1.0)"/><use href="#sf68" transform="translate(619.50 585.50) scale(1.0 1.0)"/><use href="#sf80" transform="translate(630.50 585.50) scale(1.0 1.0)"/></g>
<g stroke="#ffff00" color="#ffff00" fill="none" stroke-width="1.0" stroke-linecap="square" shape-rendering="geometricPrecision"><use href="#sf82" transform="translate(418.50 591.50) scale(0.72 0.62)"/><use href="#sf69" transform="translate(423.50 591.50) scale(0.72 0.62)"/><use href="#sf70" transform="translate(427.50 591.50) scale(0.72 0.62)"/><use href="#sf68" transform="translate(437.50 591.50) scale(0.72 0.62)"/><use href="#sf69" transform="translate(442.50 591.50) scale(0.72 0.62)"/><use href="#sf83" transform="translate(446.50 591.50) scale(0.72 0.62)"/><use href="#sf45" transform="translate(451.50 591.50) scale(0.72 0.62)"/><use href="#sf76" transform="translate(456.50 591.50) scale(0.72 0.62)"/><use href="#sf69" transform="translate(460.50 591.50) scale(0.72 0.62)"/><use href="#sf68" transform="translate(465.50 591.50) scale(0.72 0.62)"/><use href="#sf54" transform="translate(470.50 591.50) scale(0.72 0.62)"/></g>
<g stroke="#ffff00" color="#ffff00" fill="none" stroke-width="1.0" stroke-linecap="square" shape-rendering="geometricPrecision"><use href="#sf80" transform="translate(407.50 596.50) scale(1.0 1.0)"/><use href="#sf65" transform="translate(418.50 596.50) scale(1.0 1.0)"/><use href="#sf82" transform="translate(428.50 596.50) scale(1.0 1.0)"/><use href="#sf84" transform="translate(439.50 596.50) scale(1.0 1.0)"/><use href="#sf95" transform="translate(449.50 596.50) scale(1.0 1.0)"/><use href="#sf76" transform="translate(460.50 596.50) scale(1.0 1.0)"/><use href="#sf65" transform="translate(471.50 596.50) scale(1.0 1.0)"/><use href="#sf66" transform="translate(481.50 596.50) scale(1.0 1.0)"/><use href="#sf69" transform="translate(492.50 596.50) scale(1.0 1.0)"/><use href="#sf76" transform="translate(503.50 596.50) scale(1.0 1.0)"/><rect x="514.00" y="599.00" width="4.00" height="2" fill="#ffff00" stroke="none"/></g>
<g stroke="#ffffff" color="#ffffff" fill="none" stroke-width="1.0" stroke-linecap="square" shape-rendering="geometricPrecision"><use href="#sf88" transform="translate(428.50 596.50) scale(1.0 1.0)"/><use href="#sf49" transform="translate(439.50 596.50) scale(1.0 1.0)"/><use href="#sf73" transform="translate(449.50 596.50) scale(1.0 1.0)"/><use href="#sf49" transform="translate(460.50 596.50) scale(1.0 1.0)"/><use href="#sf56" transform="translate(471.50 596.50) scale(1.0 1.0)"/><use href="#sf49" transform="translate(482.50 596.50) scale(1.0 1.0)"/></g>
<g stroke="#ffffff" color="#ffffff" fill="none" stroke-width="1.0" stroke-linecap="square" shape-rendering="geometricPrecision"><use href="#sf88" transform="translate(661.50 160.50) scale(1.0 1.0)"/><use href="#sf49" transform="translate(672.50 160.50) scale(1.0 1.0)"/><use href="#sf73" transform="translate(682.50 160.50) scale(1.0 1.0)"/><use href="#sf49" transform="translate(693.50 160.50) scale(1.0 1.0)"/><use href="#sf57" transform="translate(704.50 160.50) scale(1.0 1.0)"/><use href="#sf53" transform="translate(714.50 160.50) scale(1.0 1.0)"/></g>
<g stroke="#ffff00" color="#ffff00" fill="none" stroke-width="1.0" stroke-linecap="square" shape-rendering="geometricPrecision"><use href="#sf82" transform="translate(662.50 166.50) scale(0.72 0.62)"/><use href="#sf69" transform="translate(667.50 166.50) scale(0.72 0.62)"/><use href="#sf70" transform="translate(671.50 166.50) scale(0.72 0.62)"/><use href="#sf68" transform="translate(681.50 166.50) scale(0.72 0.62)"/><use href="#sf69" transform="translate(686.50 166.50) scale(0.72 0.62)"/><use href="#sf83" transform="translate(690.50 166.50) scale(0.72 0.62)"/><use href="#sf45" transform="translate(695.50 166.50) scale(0.72 0.62)"/><use href="#sf76" transform="translate(700.50 166.50) scale(0.72 0.62)"/><use href="#sf69" transform="translate(704.50 166.50) scale(0.72 0.62)"/><use href="#sf68" transform="translate(709.50 166.50) scale(0.72 0.62)"/><use href="#sf50" transform="translate(714.50 166.50) scale(0.72 0.62)"/></g>
<g stroke="#ffffff" color="#ffffff" fill="none" stroke-width="1.0" stroke-linecap="square" shape-rendering="geometricPrecision"><use href="#sf67" transform="translate(833.50 218.50) scale(1.0 1.2857142857142858)"/><use href="#sf79" transform="translate(846.50 218.50) scale(1.0 1.2857142857142858)"/><use href="#sf77" transform="translate(858.50 218.50) scale(1.0 1.2857142857142858)"/><use href="#sf50" transform="translate(871.50 218.50) scale(1.0 1.2857142857142858)"/></g>
<g stroke="#ffff00" color="#ffff00" fill="none" stroke-width="1.0" stroke-linecap="square" shape-rendering="geometricPrecision"><use href="#sf49" transform="translate(852.50 246.50) scale(1.0 1.0)"/><use href="#sf48" transform="translate(863.50 246.50) scale(1.0 1.0)"/></g>
<g stroke="#ffffff" color="#ffffff" fill="none" stroke-width="1.0" stroke-linecap="square" shape-rendering="geometricPrecision"><use href="#sf67" transform="translate(833.50 254.50) scale(1.0 1.2857142857142858)"/><use href="#sf79" transform="translate(846.50 254.50) scale(1.0 1.2857142857142858)"/><use href="#sf77" transform="translate(858.50 254.50) scale(1.0 1.2857142857142858)"/><use href="#sf49" transform="translate(871.50 254.50) scale(1.0 1.2857142857142858)"/></g>
<g stroke="#ffff00" color="#ffff00" fill="none" stroke-width="1.0" stroke-linecap="square" shape-rendering="geometricPrecision"><use href="#sf57" transform="translate(852.50 276.50) scale(1.0 1.0)"/></g>
<g stroke="#ffffff" fill="none" stroke-width="1" stroke-linecap="square"><use href="#sf65" transform="translate(656.50 325.50) rotate(-90) scale(1.0 1.25)"/></g>
<g stroke="#ffffff" fill="none" stroke-width="1" stroke-linecap="square"><use href="#sf66" transform="translate(677.50 325.50) rotate(-90) scale(1.0 1.25)"/></g>
<g stroke="#ffffff" fill="none" stroke-width="1" stroke-linecap="square"><use href="#sf67" transform="translate(698.50 325.50) rotate(-90) scale(1.0 1.25)"/></g>
<g stroke="#ffffff" fill="none" stroke-width="1" stroke-linecap="square"><use href="#sf68" transform="translate(719.50 325.50) rotate(-90) scale(1.0 1.25)"/></g>
<g stroke="#ffffff" fill="none" stroke-width="1" stroke-linecap="square"><use href="#sf69" transform="translate(741.50 325.50) rotate(-90) scale(1.0 1.25)"/></g>
<g stroke="#ffffff" fill="none" stroke-width="1" stroke-linecap="square"><use href="#sf70" transform="translate(762.50 325.50) rotate(-90) scale(1.0 1.25)"/></g>
<g stroke="#ffffff" fill="none" stroke-width="1" stroke-linecap="square"><use href="#sf71" transform="translate(783.50 325.50) rotate(-90) scale(1.0 1.25)"/></g>
<g stroke="#ffffff" fill="none" stroke-width="1" stroke-linecap="square"><use href="#sf68" transform="translate(804.50 325.50) rotate(-90) scale(1.0 1.25)"/></g>
<g stroke="#ffffff" fill="none" stroke-width="1" stroke-linecap="square"><use href="#sf66" transform="translate(806.50 312.50) rotate(-90) scale(1.0 1.25)"/></g>
<g stroke="#ffff00" color="#ffff00" fill="none" stroke-width="1.0" stroke-linecap="square" shape-rendering="geometricPrecision"><use href="#sf80" transform="translate(651.50 340.50) scale(1.0 1.0)"/><use href="#sf65" transform="translate(662.50 340.50) scale(1.0 1.0)"/><use href="#sf82" transform="translate(672.50 340.50) scale(1.0 1.0)"/><use href="#sf84" transform="translate(683.50 340.50) scale(1.0 1.0)"/><use href="#sf95" transform="translate(693.50 340.50) scale(1.0 1.0)"/><use href="#sf78" transform="translate(704.50 340.50) scale(1.0 1.0)"/><use href="#sf65" transform="translate(715.50 340.50) scale(1.0 1.0)"/><use href="#sf77" transform="translate(725.50 340.50) scale(1.0 1.0)"/><use href="#sf69" transform="translate(736.50 340.50) scale(1.0 1.0)"/><rect x="748.00" y="343.00" width="4.00" height="2" fill="#ffff00" stroke="none"/><use href="#sf68" transform="translate(757.50 340.50) scale(1.0 1.0)"/><use href="#sf80" transform="translate(768.50 340.50) scale(1.0 1.0)"/><use href="#sf89" transform="translate(778.50 340.50) scale(1.0 1.0)"/><use href="#sf45" transform="translate(789.50 340.50) scale(1.0 1.0)"/><use href="#sf55" transform="translate(800.50 340.50) scale(1.0 1.0)"/><use href="#sf45" transform="translate(810.50 340.50) scale(1.0 1.0)"/><use href="#sf83" transform="translate(821.50 340.50) scale(1.0 1.0)"/><use href="#sf69" transform="translate(831.50 340.50) scale(1.0 1.0)"/><use href="#sf71" transform="translate(842.50 340.50) scale(1.0 1.0)"/><use href="#sf45" transform="translate(853.50 340.50) scale(1.0 1.0)"/><use href="#sf68" transform="translate(863.50 340.50) scale(1.0 1.0)"/><use href="#sf80" transform="translate(874.50 340.50) scale(1.0 1.0)"/></g>
<g stroke="#ffff00" color="#ffff00" fill="none" stroke-width="1.0" stroke-linecap="square" shape-rendering="geometricPrecision"><use href="#sf80" transform="translate(651.50 351.50) scale(1.0 1.0)"/><use href="#sf65" transform="translate(662.50 351.50) scale(1.0 1.0)"/><use href="#sf82" transform="translate(672.50 351.50) scale(1.0 1.0)"/><use href="#sf84" transform="translate(683.50 351.50) scale(1.0 1.0)"/><use href="#sf95" transform="translate(693.50 351.50) scale(1.0 1.0)"/><use href="#sf76" transform="translate(704.50 351.50) scale(1.0 1.0)"/><use href="#sf65" transform="translate(715.50 351.50) scale(1.0 1.0)"/><use href="#sf66" transform="translate(725.50 351.50) scale(1.0 1.0)"/><use href="#sf69" transform="translate(736.50 351.50) scale(1.0 1.0)"/><use href="#sf76" transform="translate(747.50 351.50) scale(1.0 1.0)"/><rect x="758.00" y="354.00" width="4.00" height="2" fill="#ffff00" stroke="none"/></g>
<g stroke="#ffff00" color="#ffff00" fill="none" stroke-width="1.0" stroke-linecap="square" shape-rendering="geometricPrecision"><use href="#sf49" transform="translate(672.50 340.50) scale(1.0 1.0)"/></g>
<g stroke="#ffff00" color="#ffff00" fill="none" stroke-width="1.0" stroke-linecap="square" shape-rendering="geometricPrecision"><use href="#sf50" transform="translate(693.50 340.50) scale(1.0 1.0)"/></g>
<g stroke="#ffff00" color="#ffff00" fill="none" stroke-width="1.0" stroke-linecap="square" shape-rendering="geometricPrecision"><use href="#sf51" transform="translate(714.50 340.50) scale(1.0 1.0)"/></g>
<g stroke="#ffff00" color="#ffff00" fill="none" stroke-width="1.0" stroke-linecap="square" shape-rendering="geometricPrecision"><use href="#sf52" transform="translate(736.50 340.50) scale(1.0 1.0)"/></g>
<g stroke="#ffff00" color="#ffff00" fill="none" stroke-width="1.0" stroke-linecap="square" shape-rendering="geometricPrecision"><use href="#sf53" transform="translate(757.50 340.50) scale(1.0 1.0)"/></g>
<g stroke="#ffff00" color="#ffff00" fill="none" stroke-width="1.0" stroke-linecap="square" shape-rendering="geometricPrecision"><use href="#sf54" transform="translate(778.50 340.50) scale(1.0 1.0)"/></g>
<g stroke="#ffff00" color="#ffff00" fill="none" stroke-width="1.0" stroke-linecap="square" shape-rendering="geometricPrecision"><use href="#sf55" transform="translate(799.50 340.50) scale(1.0 1.0)"/></g>
<g stroke="#ffff00" color="#ffff00" fill="none" stroke-width="1.0" stroke-linecap="square" shape-rendering="geometricPrecision"><use href="#sf56" transform="translate(820.50 340.50) scale(1.0 1.0)"/></g>
<g stroke="#ffff00" color="#ffff00" fill="none" stroke-width="1.0" stroke-linecap="square" shape-rendering="geometricPrecision"><use href="#sf68" transform="translate(651.50 414.50) scale(1.0 1.0)"/><use href="#sf80" transform="translate(662.50 414.50) scale(1.0 1.0)"/><use href="#sf89" transform="translate(672.50 414.50) scale(1.0 1.0)"/><use href="#sf45" transform="translate(683.50 414.50) scale(1.0 1.0)"/><use href="#sf55" transform="translate(693.50 414.50) scale(1.0 1.0)"/><use href="#sf45" transform="translate(704.50 414.50) scale(1.0 1.0)"/><use href="#sf83" transform="translate(715.50 414.50) scale(1.0 1.0)"/><use href="#sf69" transform="translate(725.50 414.50) scale(1.0 1.0)"/><use href="#sf71" transform="translate(736.50 414.50) scale(1.0 1.0)"/><use href="#sf45" transform="translate(747.50 414.50) scale(1.0 1.0)"/><use href="#sf68" transform="translate(757.50 414.50) scale(1.0 1.0)"/><use href="#sf80" transform="translate(768.50 414.50) scale(1.0 1.0)"/></g>
<g stroke="#ffff00" color="#ffff00" fill="none" stroke-width="1.0" stroke-linecap="square" shape-rendering="geometricPrecision"><use href="#sf49" transform="translate(672.50 414.50) scale(1.0 1.0)"/></g>
<g stroke="#ffff00" color="#ffff00" fill="none" stroke-width="1.0" stroke-linecap="square" shape-rendering="geometricPrecision"><use href="#sf50" transform="translate(693.50 414.50) scale(1.0 1.0)"/></g>
<g stroke="#ffff00" color="#ffff00" fill="none" stroke-width="1.0" stroke-linecap="square" shape-rendering="geometricPrecision"><use href="#sf51" transform="translate(714.50 414.50) scale(1.0 1.0)"/></g>
<g stroke="#ffff00" color="#ffff00" fill="none" stroke-width="1.0" stroke-linecap="square" shape-rendering="geometricPrecision"><use href="#sf52" transform="translate(736.50 414.50) scale(1.0 1.0)"/></g>
<g stroke="#ffff00" color="#ffff00" fill="none" stroke-width="1.0" stroke-linecap="square" shape-rendering="geometricPrecision"><use href="#sf53" transform="translate(757.50 414.50) scale(1.0 1.0)"/></g>
<g stroke="#ffff00" color="#ffff00" fill="none" stroke-width="1.0" stroke-linecap="square" shape-rendering="geometricPrecision"><use href="#sf54" transform="translate(778.50 414.50) scale(1.0 1.0)"/></g>
<g stroke="#ffff00" color="#ffff00" fill="none" stroke-width="1.0" stroke-linecap="square" shape-rendering="geometricPrecision"><use href="#sf55" transform="translate(799.50 414.50) scale(1.0 1.0)"/></g>
<g stroke="#ffff00" color="#ffff00" fill="none" stroke-width="1.0" stroke-linecap="square" shape-rendering="geometricPrecision"><use href="#sf56" transform="translate(820.50 414.50) scale(1.0 1.0)"/></g>
<g stroke="#ffffff" fill="none" stroke-width="1" stroke-linecap="square"><use href="#sf65" transform="translate(656.50 445.50) rotate(-90) scale(1.0 1.25)"/></g>
<g stroke="#ffffff" fill="none" stroke-width="1" stroke-linecap="square"><use href="#sf66" transform="translate(677.50 445.50) rotate(-90) scale(1.0 1.25)"/></g>
<g stroke="#ffffff" fill="none" stroke-width="1" stroke-linecap="square"><use href="#sf67" transform="translate(698.50 445.50) rotate(-90) scale(1.0 1.25)"/></g>
<g stroke="#ffffff" fill="none" stroke-width="1" stroke-linecap="square"><use href="#sf68" transform="translate(719.50 445.50) rotate(-90) scale(1.0 1.25)"/></g>
<g stroke="#ffffff" fill="none" stroke-width="1" stroke-linecap="square"><use href="#sf69" transform="translate(741.50 445.50) rotate(-90) scale(1.0 1.25)"/></g>
<g stroke="#ffffff" fill="none" stroke-width="1" stroke-linecap="square"><use href="#sf70" transform="translate(762.50 445.50) rotate(-90) scale(1.0 1.25)"/></g>
<g stroke="#ffffff" fill="none" stroke-width="1" stroke-linecap="square"><use href="#sf71" transform="translate(783.50 445.50) rotate(-90) scale(1.0 1.25)"/></g>
<g stroke="#ffffff" fill="none" stroke-width="1" stroke-linecap="square"><use href="#sf66" transform="translate(806.50 445.50) rotate(-90) scale(1.0 1.25)"/></g>
<rect x="658" y="445" width="171" height="1" fill="#008c00"/>
<g stroke="#ffffff" fill="none" stroke-width="1" stroke-linecap="square"><use href="#sf68" transform="translate(806.50 456.50) rotate(-90) scale(1.0 1.25)"/></g>
<g stroke="#ffff00" color="#ffff00" fill="none" stroke-width="1.0" stroke-linecap="square" shape-rendering="geometricPrecision"><use href="#sf57" transform="translate(852.50 478.50) scale(1.0 1.0)"/></g>
<g stroke="#ffffff" color="#ffffff" fill="none" stroke-width="1.0" stroke-linecap="square" shape-rendering="geometricPrecision"><use href="#sf67" transform="translate(833.50 498.50) scale(1.0 1.2857142857142858)"/><use href="#sf79" transform="translate(846.50 498.50) scale(1.0 1.2857142857142858)"/><use href="#sf77" transform="translate(858.50 498.50) scale(1.0 1.2857142857142858)"/><use href="#sf49" transform="translate(871.50 498.50) scale(1.0 1.2857142857142858)"/></g>
<g stroke="#ffff00" color="#ffff00" fill="none" stroke-width="1.0" stroke-linecap="square" shape-rendering="geometricPrecision"><use href="#sf49" transform="translate(852.50 510.50) scale(1.0 1.0)"/><use href="#sf48" transform="translate(863.50 510.50) scale(1.0 1.0)"/></g>
<g stroke="#ffffff" color="#ffffff" fill="none" stroke-width="1.0" stroke-linecap="square" shape-rendering="geometricPrecision"><use href="#sf67" transform="translate(833.50 534.50) scale(1.0 1.2857142857142858)"/><use href="#sf79" transform="translate(846.50 534.50) scale(1.0 1.2857142857142858)"/><use href="#sf77" transform="translate(858.50 534.50) scale(1.0 1.2857142857142858)"/><use href="#sf50" transform="translate(871.50 534.50) scale(1.0 1.2857142857142858)"/></g>
<g stroke="#ffff00" color="#ffff00" fill="none" stroke-width="1.0" stroke-linecap="square" shape-rendering="geometricPrecision"><use href="#sf80" transform="translate(651.50 585.50) scale(1.0 1.0)"/><use href="#sf65" transform="translate(662.50 585.50) scale(1.0 1.0)"/><use href="#sf82" transform="translate(672.50 585.50) scale(1.0 1.0)"/><use href="#sf84" transform="translate(683.50 585.50) scale(1.0 1.0)"/><use href="#sf95" transform="translate(693.50 585.50) scale(1.0 1.0)"/><use href="#sf78" transform="translate(704.50 585.50) scale(1.0 1.0)"/><use href="#sf65" transform="translate(715.50 585.50) scale(1.0 1.0)"/><use href="#sf77" transform="translate(725.50 585.50) scale(1.0 1.0)"/><use href="#sf69" transform="translate(736.50 585.50) scale(1.0 1.0)"/><rect x="748.00" y="588.00" width="4.00" height="2" fill="#ffff00" stroke="none"/><use href="#sf68" transform="translate(757.50 585.50) scale(1.0 1.0)"/><use href="#sf80" transform="translate(768.50 585.50) scale(1.0 1.0)"/><use href="#sf89" transform="translate(778.50 585.50) scale(1.0 1.0)"/><use href="#sf45" transform="translate(789.50 585.50) scale(1.0 1.0)"/><use href="#sf55" transform="translate(800.50 585.50) scale(1.0 1.0)"/><use href="#sf45" transform="translate(810.50 585.50) scale(1.0 1.0)"/><use href="#sf53" transform="translate(821.50 585.50) scale(1.0 1.0)"/><use href="#sf69" transform="translate(831.50 585.50) scale(1.0 1.0)"/><use href="#sf71" transform="translate(842.50 585.50) scale(1.0 1.0)"/><use href="#sf45" transform="translate(853.50 585.50) scale(1.0 1.0)"/><use href="#sf68" transform="translate(863.50 585.50) scale(1.0 1.0)"/><use href="#sf80" transform="translate(874.50 585.50) scale(1.0 1.0)"/></g>
<g stroke="#ffff00" color="#ffff00" fill="none" stroke-width="1.0" stroke-linecap="square" shape-rendering="geometricPrecision"><use href="#sf82" transform="translate(662.50 591.50) scale(0.72 0.62)"/><use href="#sf69" transform="translate(667.50 591.50) scale(0.72 0.62)"/><use href="#sf70" transform="translate(671.50 591.50) scale(0.72 0.62)"/><use href="#sf68" transform="translate(681.50 591.50) scale(0.72 0.62)"/><use href="#sf69" transform="translate(686.50 591.50) scale(0.72 0.62)"/><use href="#sf83" transform="translate(690.50 591.50) scale(0.72 0.62)"/><use href="#sf45" transform="translate(695.50 591.50) scale(0.72 0.62)"/><use href="#sf76" transform="translate(700.50 591.50) scale(0.72 0.62)"/><use href="#sf69" transform="translate(704.50 591.50) scale(0.72 0.62)"/><use href="#sf68" transform="translate(709.50 591.50) scale(0.72 0.62)"/><use href="#sf52" transform="translate(714.50 591.50) scale(0.72 0.62)"/></g>
<g stroke="#ffff00" color="#ffff00" fill="none" stroke-width="1.0" stroke-linecap="square" shape-rendering="geometricPrecision"><use href="#sf80" transform="translate(651.50 596.50) scale(1.0 1.0)"/><use href="#sf65" transform="translate(662.50 596.50) scale(1.0 1.0)"/><use href="#sf82" transform="translate(672.50 596.50) scale(1.0 1.0)"/><use href="#sf84" transform="translate(683.50 596.50) scale(1.0 1.0)"/><use href="#sf95" transform="translate(693.50 596.50) scale(1.0 1.0)"/><use href="#sf76" transform="translate(704.50 596.50) scale(1.0 1.0)"/><use href="#sf65" transform="translate(715.50 596.50) scale(1.0 1.0)"/><use href="#sf66" transform="translate(725.50 596.50) scale(1.0 1.0)"/><use href="#sf69" transform="translate(736.50 596.50) scale(1.0 1.0)"/><use href="#sf76" transform="translate(747.50 596.50) scale(1.0 1.0)"/><rect x="758.00" y="599.00" width="4.00" height="2" fill="#ffff00" stroke="none"/></g>
<g stroke="#ffffff" color="#ffffff" fill="none" stroke-width="1.0" stroke-linecap="square" shape-rendering="geometricPrecision"><use href="#sf88" transform="translate(672.50 596.50) scale(1.0 1.0)"/><use href="#sf49" transform="translate(683.50 596.50) scale(1.0 1.0)"/><use href="#sf73" transform="translate(693.50 596.50) scale(1.0 1.0)"/><use href="#sf49" transform="translate(704.50 596.50) scale(1.0 1.0)"/><use href="#sf56" transform="translate(715.50 596.50) scale(1.0 1.0)"/><use href="#sf51" transform="translate(726.50 596.50) scale(1.0 1.0)"/></g>
</svg>
<!-- v scrollbar -->
<div class="a xpb" style="left:994px;top:122px;width:14px;height:15px"><svg class="a" style="left:2px;top:3px" width="10" height="8"><path class="chev" d="M1.5 6L5 2.5 8.5 6"/></svg></div>
<div class="a xpb" style="left:993px;top:275px;width:15px;height:131px"><svg class="a" style="left:3px;top:61px" width="8" height="8" shape-rendering="crispEdges"><path d="M0 1h8M0 3h8M0 5h8M0 7h8" stroke="#8aa0e8"/></svg></div>
<div class="a xpb" style="left:994px;top:610px;width:14px;height:15px"><svg class="a" style="left:2px;top:3px" width="10" height="8"><path class="chev" d="M1.5 2L5 5.5 8.5 2"/></svg></div>
<!-- h scrollbar -->
<div class="a xpb" style="left:152px;top:627px;width:15px;height:15px"><svg class="a" style="left:3px;top:2px" width="8" height="10"><path class="chev" d="M5.5 1.5L2 5l3.5 3.5"/></svg></div>
<div class="a xpb" style="left:313px;top:627px;width:289px;height:15px"><svg class="a" style="left:140px;top:3px" width="9" height="8" shape-rendering="crispEdges"><path d="M1 0v8M3 0v8M5 0v8M7 0v8" stroke="#8aa0e8"/></svg></div>
<div class="a xpb" style="left:976px;top:627px;width:15px;height:15px"><svg class="a" style="left:4px;top:2px" width="8" height="10"><path class="chev" d="M2 1.5L5.5 5 2 8.5"/></svg></div>
<div class="a" style="left:992px;top:626px;width:17px;height:17px;background:#ece9d8"></div>

<!-- TABS -->
<div class="a" style="left:330px;top:650px;width:694px;height:1px;background:#000"></div>
<div class="a" style="left:144px;top:650px;width:94px;height:1px;background:#000"></div>
<div class="a" style="left:150px;top:671px;width:88px;height:1px;background:#000"></div>
<div class="a" style="left:238px;top:673px;width:92px;height:1px;background:#000"></div>
<div class="a" style="left:329px;top:650px;width:1px;height:24px;background:#000"></div>
<svg class="a" style="left:151px;top:653px" width="17" height="17" shape-rendering="crispEdges"><rect x="0" y="0" width="17" height="17" fill="#d6e6cf"/><rect x="0" y="0" width="17" height="5" fill="#4aa04a"/><rect x="10" y="10" width="6" height="6" fill="#c8c8c8"/><path d="M3 15 L14 3" stroke="#f0b030" stroke-width="3" shape-rendering="auto"/><rect x="1" y="14" width="3" height="3" fill="#d02020"/></svg>
<div class="sb" style="left:182px;top:655px;font-weight:normal;transform:scaleX(.83)">Welcome</div>
<svg class="a" style="left:240px;top:653px" width="17" height="17" viewBox="0 0 17 17"><rect x="4.5" y="1.5" width="10" height="14" fill="#fff" stroke="#000"/><rect x="1.5" y="4.5" width="9" height="9" fill="#e6f0e0" stroke="#2c6a2c"/><path d="M3 12L9 6" stroke="#f0b030" stroke-width="2.5"/></svg>
<div class="sb" style="left:284px;top:658px">pcb</div>

<!-- BOTTOM PANEL -->
<div class="a" style="left:0;top:677px;width:1024px;height:1px;background:#fff"></div>
<div class="a" style="left:0;top:681px;width:1024px;height:1px;background:#000"></div>
<div class="a" style="left:3px;top:688px;width:13px;height:12px;background:#fff;border:1px solid #b0b0b0"><svg class="a" style="left:2px;top:2px" width="8" height="8"><path d="M1 1L7 7M7 1L1 7" stroke="#000" stroke-width="1.8"/></svg></div>
<div class="a" style="left:3px;top:701px;width:13px;height:12px;background:#f4f4f4;border:1px solid #b0b0b0"><svg class="a" style="left:3px;top:2px" width="6" height="8"><path d="M5 0v8L1 4z" fill="#000"/></svg></div>
<div class="a" style="left:23px;top:696px;width:13px;height:13px;background:#fff;border:1px solid #1c5180"><svg class="a" style="left:1px;top:1px" width="10" height="10"><path d="M2 5l2 2.5 4.5-5" stroke="#21a121" stroke-width="2" fill="none"/></svg></div>
<div class="a" style="left:40px;top:694px;font:12px 'Liberation Sans',sans-serif;color:#000;white-space:nowrap;transform:scaleX(.87);transform-origin:0 0;line-height:16px">Enable cross probing for design:</div>
<div class="a" style="left:207px;top:691px;width:150px;height:23px;border:1px solid #7f9db9"></div>
<div class="a" style="left:210px;top:694px;font:12px 'Liberation Sans',sans-serif;color:#000;line-height:14px">pcb</div>
<div class="a" style="left:984px;top:682px;width:1px;height:36px;background:#000"></div>
<div class="a" style="left:986px;top:687px;width:13px;height:12px;background:#fff;border:1px solid #b0b0b0"><svg class="a" style="left:2px;top:2px" width="8" height="8"><path d="M1 1L7 7M7 1L1 7" stroke="#000" stroke-width="1.8"/></svg></div>
<div class="a" style="left:986px;top:700px;width:13px;height:12px;background:#f4f4f4;border:1px solid #b0b0b0"><svg class="a" style="left:3px;top:2px" width="6" height="8"><path d="M5 0v8L1 4z" fill="#000"/></svg></div>
<div class="a" style="left:1003px;top:690px;width:21px;height:24px;background:#fff;border:1px solid #7f9db9;border-radius:4px 0 0 4px"><svg class="a" style="left:5px;top:6px" width="8" height="11"><path d="M7 0v11L1 5.5z" fill="#000"/></svg></div>

<!-- STATUS -->
<div class="a" style="left:0;top:718px;width:1024px;height:1px;background:#aca899"></div>
<div class="a" style="left:0;top:719px;width:1024px;height:1px;background:#fff"></div>
<div class="ss" style="left:0;top:724px;font-size:12px;transform:scaleX(.861)">0 objects selected</div>
<div class="a sep" style="left:658px;top:721px;height:16px"></div>
<div class="a sep" style="left:738px;top:721px;height:16px"></div>
<div class="a sep" style="left:821px;top:721px;height:16px"></div>
<div class="a sep" style="left:922px;top:721px;height:16px"></div>
<div class="a sep" style="left:997px;top:721px;height:16px"></div>
<div class="ss" style="left:665px;top:723px;font-size:12px;transform:scaleX(.83)">Select</div>
<div class="ss" style="left:745px;top:723px;font-size:12px;transform:scaleX(.83)">1160, 997</div>
<div class="ss" style="left:827px;top:723px;font-size:12px;transform:scaleX(.83)">DX=-4, DY=0</div>
<div class="ss" style="left:928px;top:723px;font-size:12px;transform:scaleX(.83)">Sheet 1</div>

<!-- TASKBAR -->
<div class="a" style="left:0;top:738px;width:1024px;height:30px;background:linear-gradient(#3b7ef0 0,#2f6ce8 2px,#2560de 4px,#245cd8 50%,#2258d2 88%,#1f4bbc 100%)"></div>
<div class="a" style="left:0;top:738px;width:97px;height:30px;border-radius:0 12px 12px 0;background:linear-gradient(#5aae5a 0,#3d963d 3px,#369536 50%,#2f8a2f 85%,#286f28 100%)"></div>
<svg class="a" style="left:9px;top:743px" width="22" height="20"><path d="M2 3q4-2 8 0v7q-4-2-8 0z" fill="#f05a28"/><path d="M11 3q4 2 8 0v7q-4 2-8 0z" fill="#7cbb28"/><path d="M2 11q4-2 8 0v7q-4-2-8 0z" fill="#1f8cf0"/><path d="M11 11q4 2 8 0v7q-4 2-8 0z" fill="#f8c418"/></svg>

<svg class="a" style="left:108px;top:744px" width="17" height="17"><circle cx="8.5" cy="8.5" r="6" fill="none" stroke="#2a8ae8" stroke-width="3"/><path d="M3 8.5h11" stroke="#2a8ae8" stroke-width="2.5"/><path d="M1 12q8-13 15-9" stroke="#f0c030" stroke-width="1.2" fill="none"/></svg>
<svg class="a" style="left:133px;top:744px" width="17" height="17" shape-rendering="crispEdges"><rect x="0" y="0" width="17" height="17" fill="#1a3a8a"/><rect x="1" y="1" width="15" height="6" fill="#d8d8e8"/><rect x="2" y="9" width="13" height="6" fill="#3a78d8"/></svg>
<svg class="a" style="left:155px;top:744px" width="17" height="17"><rect x="2" y="1" width="12" height="15" rx="2" fill="#e8eef8" stroke="#2a60c8"/><circle cx="8" cy="9" r="4" fill="none" stroke="#2a80e8" stroke-width="2"/></svg>
<!-- task buttons -->
<div class="a" style="left:181px;top:741px;width:134px;height:25px;border-radius:3px;background:linear-gradient(#4a8cf6,#3d7ff0 30%,#3a7aee 80%,#2f68d8);border:1px solid #2a5ccc"></div>
<svg class="a" style="left:190px;top:745px" width="16" height="16"><path d="M8 0l8 8-8 8-8-8z" fill="#fff"/><path d="M8 2l6 6-6 6-6-6z" fill="#2a6e2a"/><path d="M2 8l6-6 6 6z" fill="#e8e8e8"/><circle cx="8" cy="8" r="2.5" fill="#1a2a6a"/></svg>
<div class="sb" style="left:211px;top:748px;color:#fff;font-weight:normal;transform:scaleX(.83)">Dashboard</div>
<div class="a" style="left:316px;top:741px;width:130px;height:25px;border-radius:3px;background:linear-gradient(#1b4db8,#1e52be 20%,#2257c4);border:1px solid #173f9c"></div>
<svg class="a" style="left:327px;top:745px" width="16" height="16" shape-rendering="crispEdges"><rect x="0" y="0" width="16" height="16" fill="#d6e6cf"/><rect x="0" y="0" width="16" height="5" fill="#4aa04a"/><rect x="9" y="9" width="6" height="6" fill="#c8c8c8"/><path d="M3 14 L13 3" stroke="#f0b030" stroke-width="3" shape-rendering="auto"/><rect x="1" y="13" width="3" height="3" fill="#d02020"/></svg>
<div class="sb" style="left:347px;top:748px;color:#fff;font-weight:normal;transform:scaleX(.83)">DxDesigner -...</div>
<div class="a" style="left:450px;top:741px;width:135px;height:25px;border-radius:3px;background:linear-gradient(#4a8cf6,#3d7ff0 30%,#3a7aee 80%,#2f68d8);border:1px solid #2a5ccc"></div>
<svg class="a" style="left:460px;top:745px" width="16" height="16"><rect x="3" y="1" width="11" height="14" fill="#f0f4fc" stroke="#5070b0"/><circle cx="7" cy="9" r="4" fill="none" stroke="#1a80e8" stroke-width="2"/><path d="M3 9h8" stroke="#1a80e8" stroke-width="1.5"/></svg>

<div class="a" style="left:587px;top:741px;width:132px;height:25px;border-radius:3px;background:linear-gradient(#4a8cf6,#3d7ff0 30%,#3a7aee 80%,#2f68d8);border:1px solid #2a5ccc"></div>
<svg class="a" style="left:596px;top:745px" width="16" height="16" shape-rendering="crispEdges"><rect x="0" y="0" width="16" height="16" fill="#fff"/><rect x="1" y="1" width="14" height="14" fill="#e02020"/><path d="M2 6h5l3 3h4M2 10h5l3 3h4" stroke="#fff" stroke-width="1.5" fill="none" shape-rendering="auto"/></svg>
<div class="sb" style="left:616px;top:748px;color:#fff;font-weight:normal;transform:scaleX(.83)">Expedition P...</div>
<div class="a" style="left:723px;top:741px;width:133px;height:25px;border-radius:3px;background:linear-gradient(#4a8cf6,#3d7ff0 30%,#3a7aee 80%,#2f68d8);border:1px solid #2a5ccc"></div>
<svg class="a" style="left:731px;top:744px" width="16" height="18"><path d="M3 2l3 14M7 1l1 15M12 2l-3 14" stroke="#e8c040" stroke-width="2"/><path d="M4 2l2 13" stroke="#e04040" stroke-width="1.5"/><path d="M11 3l-2 12" stroke="#40a040" stroke-width="1.5"/></svg>

<!-- tray -->
<div class="a" style="left:893px;top:738px;width:131px;height:30px;background:linear-gradient(#18a0f0 0,#0f8ff0 3px,#0d88e8 50%,#0b7fe0 90%,#0a6fd0 100%);border-left:1px solid #0950a8"></div>
<svg class="a" style="left:866px;top:747px" width="16" height="12" shape-rendering="crispEdges"><rect x="0.5" y="3.5" width="15" height="8" fill="#fff" stroke="#000"/><path d="M2 5h12M2 7h12M2 9h12" stroke="#000" stroke-dasharray="1 1"/><path d="M7 0v3" stroke="#000"/></svg>
<svg class="a" style="left:885px;top:743px" width="19" height="20"><circle cx="9.5" cy="10" r="8.5" fill="#3a9af0" stroke="#d0e8ff"/><path d="M11 5l-4 5 4 5" stroke="#fff" stroke-width="2.5" fill="none"/></svg>
<svg class="a" style="left:905px;top:745px" width="16" height="16"><rect x="1" y="3" width="4" height="12" fill="#d8b040"/><circle cx="7" cy="6" r="4" fill="none" stroke="#2080e0" stroke-width="2"/><path d="M9 9l5 5" stroke="#d02020" stroke-width="2.5"/><path d="M2 14h13" stroke="#d02020" stroke-width="2"/></svg>
<svg class="a" style="left:924px;top:744px" width="16" height="17"><ellipse cx="8" cy="5" rx="4" ry="4.5" fill="#000"/><rect x="1" y="8" width="14" height="8" fill="#f0c020" stroke="#c08010"/><path d="M3 11h10M3 13h10" stroke="#c08010"/></svg>
<svg class="a" style="left:940px;top:745px" width="16" height="16"><rect x="5" y="1" width="9" height="8" fill="#c8d8f0" stroke="#6080b0"/><rect x="1" y="5" width="9" height="8" fill="#d8e4f8" stroke="#6080b0"/><path d="M4 15h8" stroke="#808080"/></svg>
<svg class="a" style="left:958px;top:745px" width="16" height="16"><circle cx="7" cy="7" r="6" fill="#808080"/><circle cx="7" cy="7" r="3" fill="#303030"/><path d="M10 14q4-2 5-6" stroke="#a0a0c0" fill="none"/></svg>
<div class="a" style="left:983px;top:746px;font:12px 'Liberation Sans',sans-serif;color:#fff;line-height:14px">3:27</div>
<svg class="a" style="left:39px;top:744px;overflow:visible" width="44" height="19"><g transform="translate(1 1)" stroke="#2a6a2a" stroke-width="0.75" fill="none"><g transform="skewX(-10)"><path transform="translate(0.00 0) scale(1.333)" d="M1 2H11M0 7H12M4 2V7.5Q4 10 1 12M8 2V12"/><path transform="translate(19.00 0) scale(1.333)" d="M3 0L1 6L5.5 11.5M5 4Q4 9 0.5 11.5M0 5.5H6M9 0L7 4H11.5M10.3 2.3L12 4.5M7.5 7V11.5M7.5 7H11.5V11.5H7.5"/></g></g><g stroke="#fff" stroke-width="1.0" fill="none" stroke-linecap="square"><g transform="skewX(-10)" vector-effect="non-scaling-stroke"><path transform="translate(0.00 0) scale(1.333)" d="M1 2H11M0 7H12M4 2V7.5Q4 10 1 12M8 2V12"/><path transform="translate(19.00 0) scale(1.333)" d="M3 0L1 6L5.5 11.5M5 4Q4 9 0.5 11.5M0 5.5H6M9 0L7 4H11.5M10.3 2.3L12 4.5M7.5 7V11.5M7.5 7H11.5V11.5H7.5"/></g></g></svg>
<svg class="a" style="left:481px;top:745px;overflow:visible" width="102" height="15"><g stroke="#fff" stroke-width="1.0" fill="none" stroke-linecap="square"><g vector-effect="non-scaling-stroke"><path transform="translate(0.00 0) scale(1.000)" d="M1 1H11M6 1L4.5 3.2M2.5 3.5V11.5H9.5V3.5H2.5M2.5 7.5H9.5"/><path transform="translate(13.00 0) scale(1.000)" d="M6 0V1.5M1 2H11.5M1.8 2V7Q1.8 10 0.5 12M3.5 4.3H11M5 3V7M9 3V7M5 6.8H9M4 8.3H10Q8 11 3 12M5 9.5Q8 11.5 11.5 12"/><path d="M26.00 6.00h13.00"/><path d="M39.00 6.00h13.00"/><path transform="translate(52.00 0) scale(1.000)" d="M6 0.3L0.3 5.5M6 0.3L11.7 5.5M3 5.8H9M3.5 8.5H8.5M1.5 11.3H10.5M6 5.8V11.3"/><path transform="translate(65.00 0) scale(1.000)" d="M0.3 2H4.3M0.8 6H4M0.3 10.5L4.5 9.2M2.3 2V10M5 3H12M8.5 0.3V11.5L7.3 10.8M10.5 0.5L11.5 1.5M5 5L6.8 7M5 10.5L8.3 7.5M9 6L12 11"/><rect x="79.00" y="10.00" width="1.5" height="1.5" stroke="none" fill="#fff"/><rect x="85.00" y="10.00" width="1.5" height="1.5" stroke="none" fill="#fff"/><rect x="91.00" y="10.00" width="1.5" height="1.5" stroke="none" fill="#fff"/></g></g></svg>
<svg class="a" style="left:751px;top:745px;overflow:visible" width="90" height="15"><g stroke="#fff" stroke-width="1.0" fill="none" stroke-linecap="square"><g vector-effect="non-scaling-stroke"><path transform="translate(0.00 0) scale(1.000)" d="M2 3H10M0.7 6H11.3M6 0.2V12M6 6L0.7 11M6 6L11.3 11"/><path transform="translate(13.00 0) scale(1.000)" d="M6 0.2L0.3 5M6 0.2L11.7 5M4 4.8H8M1.3 7V11M1.3 7H5V10.5H1.3M7 7H11V10.3L10 10.3M7 7V12"/><path transform="translate(26.00 0) scale(1.000)" d="M5 0.3L1.5 3.8M4 2H9Q6 6 1.5 7.5M4.3 3.8L6.5 5.3M3.3 6.5V11.5H11V6.5H3.3"/><path d="M46.00 6.50h4.80"/><path transform="translate(58.20 0) scale(1.000)" d="M1 1H11M1 4V11.3H11V4M3.5 3.5V9H8.5V3.5H3.5M6 3.5V9M3.5 6.2H8.5"/><path transform="translate(71.20 0) scale(1.000)" d="M1 0.8V11.7M1 0.8H11V11.7H1M5 2L3 5M5 2.8H8Q6.5 6 3.3 7M5.5 4.3L9 6.3M5.5 7.8L6.8 8.3M5 9.5L6.3 10"/></g></g></svg>
</body></html>
